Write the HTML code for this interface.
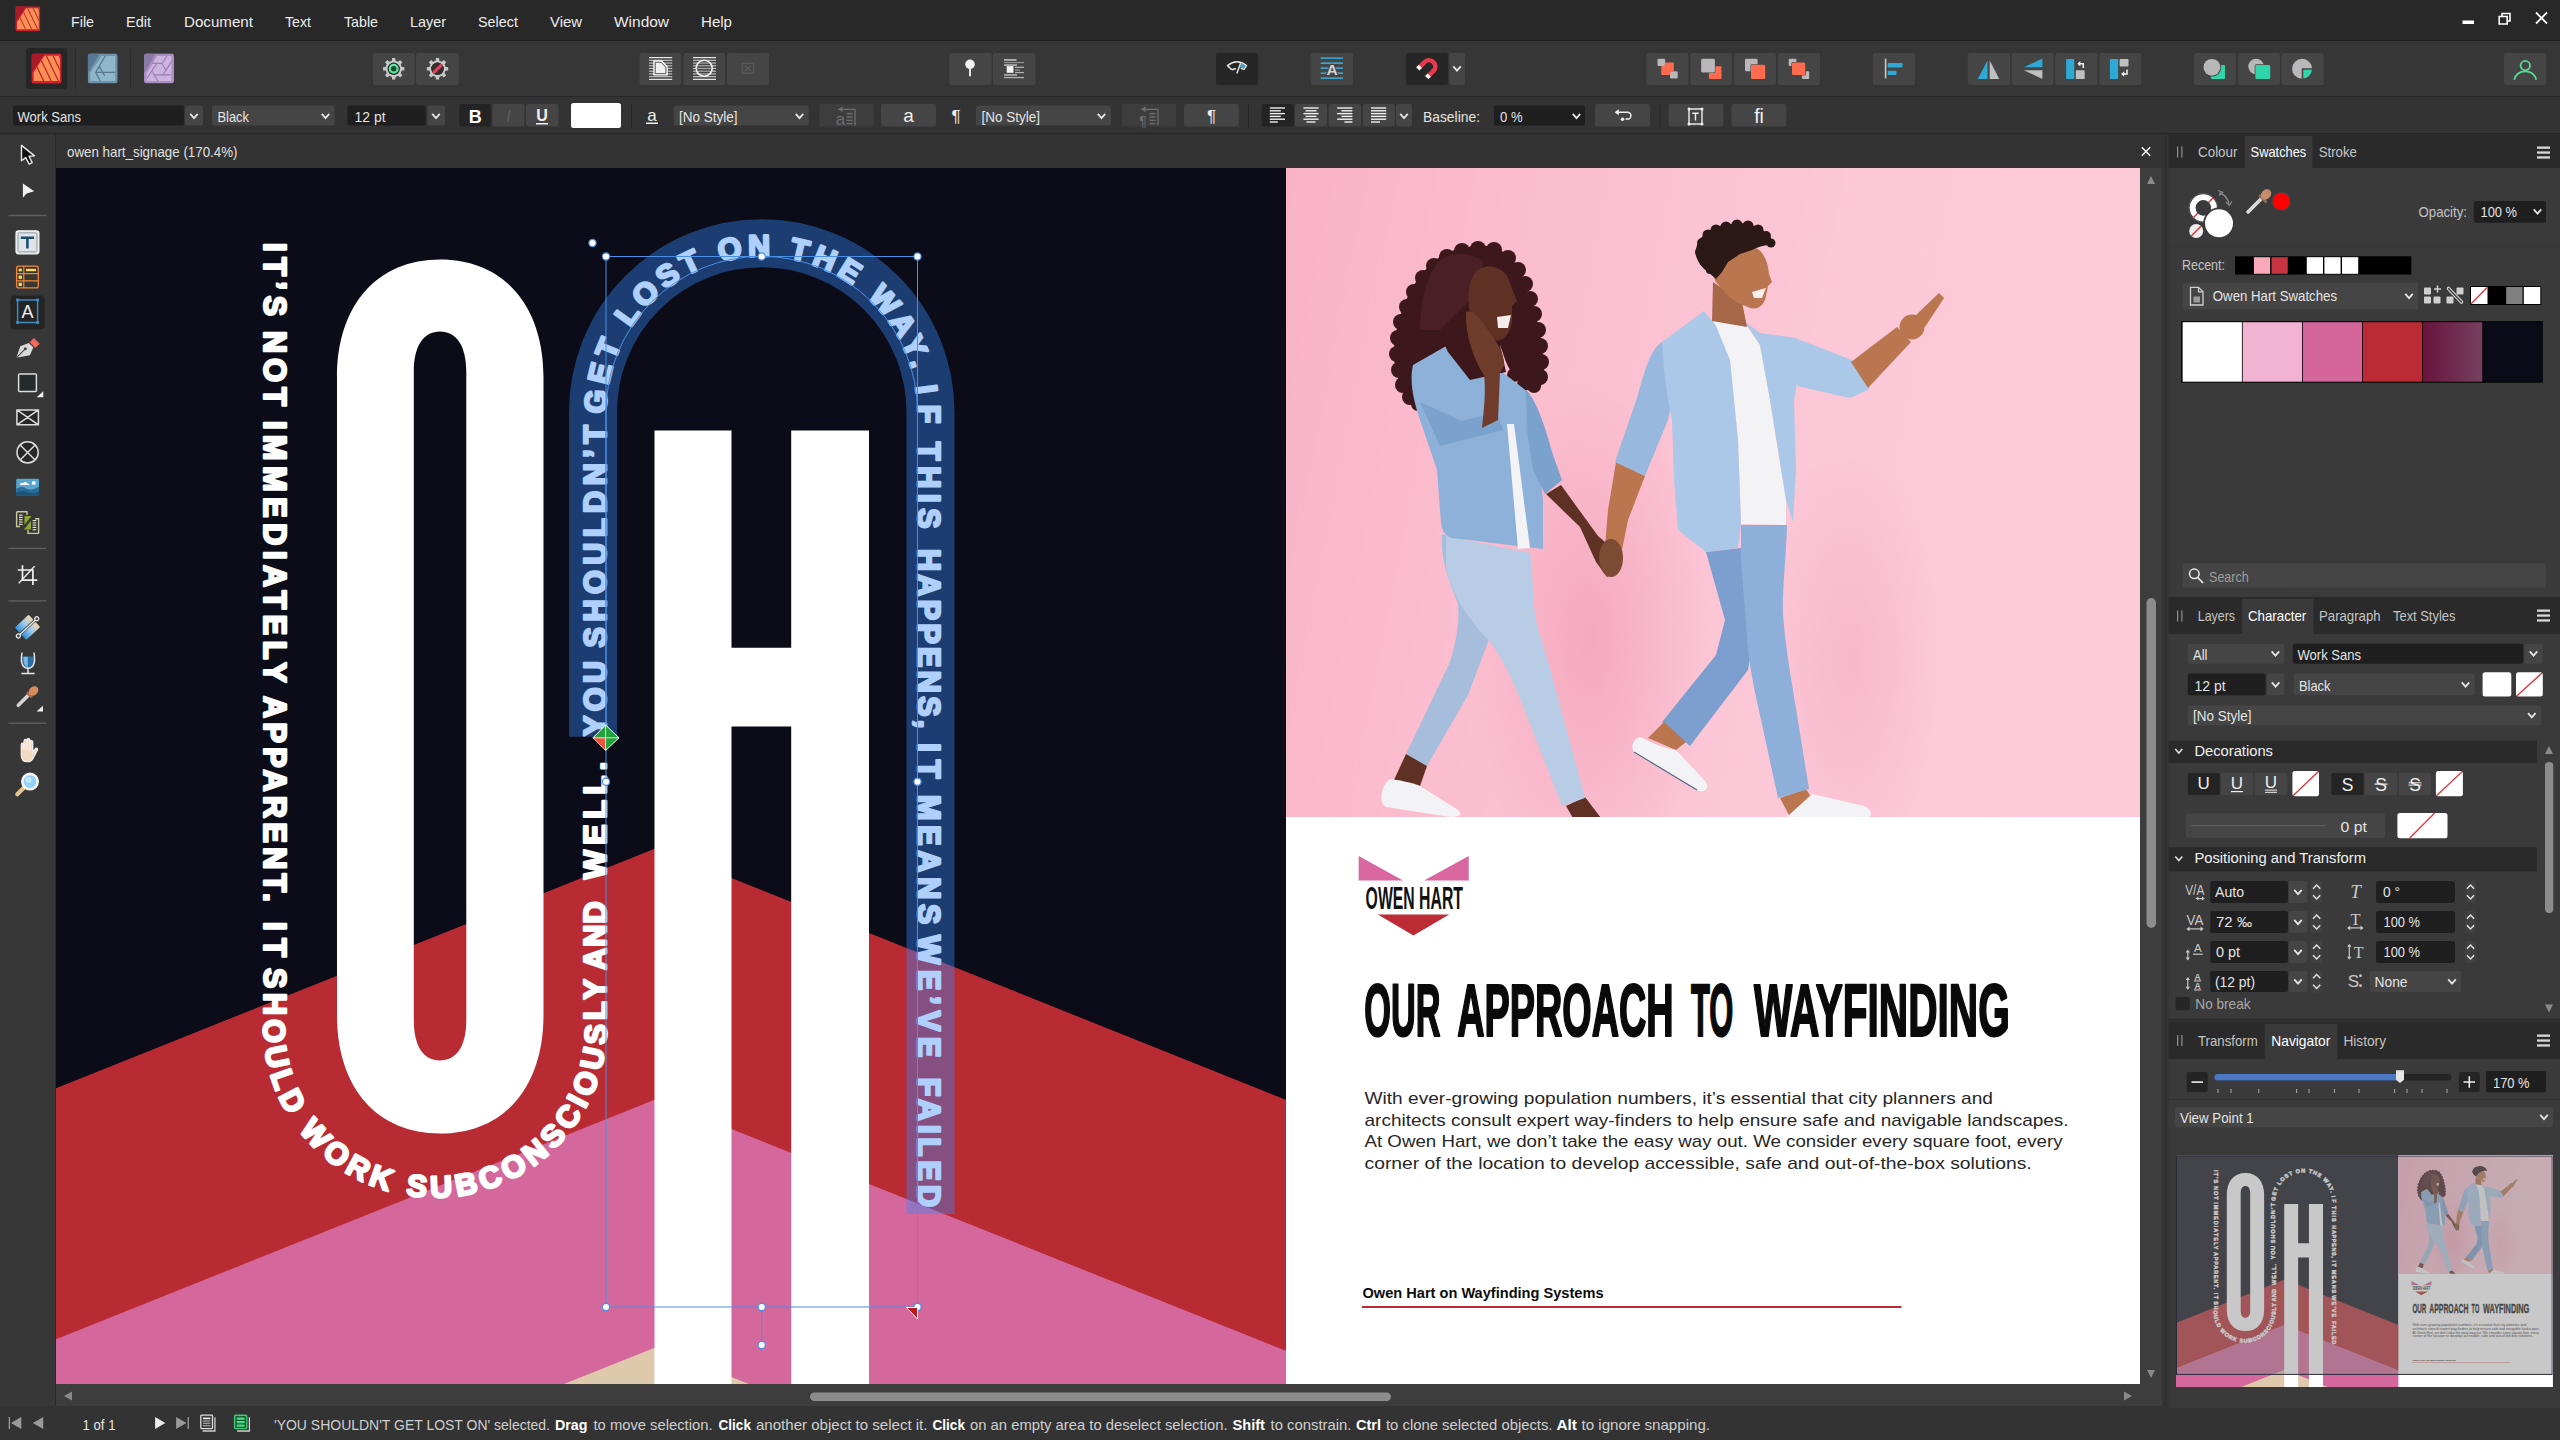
<!DOCTYPE html>
<html lang="en"><head><meta charset="utf-8"><title>Affinity Publisher - owen hart_signage</title>
<style>html,body{margin:0;padding:0;background:#333;overflow:hidden}svg{display:block;font-family:"Liberation Sans",sans-serif}</style></head>
<body><svg width="2560" height="1440" viewBox="0 0 2560 1440">
<g id="chrome">
<rect x="0" y="0" width="2560" height="1440" fill="#333333"/>
<rect x="0" y="0" width="2560" height="40" fill="#282828"/>
<rect x="0" y="40" width="2560" height="1" fill="#1e1e1e"/>
<rect x="0" y="41" width="2560" height="55" fill="#363636"/>
<rect x="0" y="96" width="2560" height="1" fill="#262626"/>
<rect x="0" y="97" width="2560" height="36" fill="#333333"/>
<rect x="0" y="133" width="2560" height="1.5" fill="#262626"/>
<rect x="0" y="134.5" width="55" height="1272" fill="#373737"/>
<rect x="55" y="134.5" width="1" height="1272" fill="#2a2a2a"/>
<rect x="56" y="134.5" width="2106" height="33.5" fill="#333333"/>
<text x="67" y="157" font-size="14.5" fill="#e0e0e0" textLength="170.5" lengthAdjust="spacingAndGlyphs">owen hart_signage (170.4%)</text>
<path d="M2141.800 147.300 l8.400 8.400 M2150.200 147.300 l-8.400 8.400" stroke="#f0f0f0" stroke-width="1.500" fill="none"/>
<rect x="2140" y="168" width="22" height="1216" fill="#3d3d3d"/>
<rect x="56" y="1384" width="2106" height="22" fill="#3d3d3d"/>
<rect x="2162" y="134.5" width="6.5" height="1272" fill="#343434"/>
<rect x="2164.5" y="134.5" width="2" height="1272" fill="#2e2e2e"/>
<path d="M2147 184 l4 -8 l4 8z" fill="#8a8a8a"/>
<path d="M2147 1370 l4 8 l4 -8z" fill="#8a8a8a"/>
<rect x="2146.5" y="598" width="9.5" height="330" rx="4.7" fill="#8c8c8c"/>
<path d="M72 1391.5 l-8 4.5 l8 4.5z" fill="#8a8a8a"/>
<path d="M2124 1391.5 l8 4.5 l-8 4.5z" fill="#8a8a8a"/>
<rect x="810" y="1392.5" width="581" height="8.5" rx="4.2" fill="#8c8c8c"/>
<rect x="0" y="1406" width="2560" height="34" fill="#333333"/>
<text x="71" y="27" font-size="15" fill="#ececec" textLength="23" lengthAdjust="spacingAndGlyphs">File</text>
<text x="126" y="27" font-size="15" fill="#ececec" textLength="25" lengthAdjust="spacingAndGlyphs">Edit</text>
<text x="184" y="27" font-size="15" fill="#ececec" textLength="69" lengthAdjust="spacingAndGlyphs">Document</text>
<text x="285" y="27" font-size="15" fill="#ececec" textLength="26" lengthAdjust="spacingAndGlyphs">Text</text>
<text x="344" y="27" font-size="15" fill="#ececec" textLength="34" lengthAdjust="spacingAndGlyphs">Table</text>
<text x="410" y="27" font-size="15" fill="#ececec" textLength="36" lengthAdjust="spacingAndGlyphs">Layer</text>
<text x="478" y="27" font-size="15" fill="#ececec" textLength="40" lengthAdjust="spacingAndGlyphs">Select</text>
<text x="550" y="27" font-size="15" fill="#ececec" textLength="32" lengthAdjust="spacingAndGlyphs">View</text>
<text x="614" y="27" font-size="15" fill="#ececec" textLength="55" lengthAdjust="spacingAndGlyphs">Window</text>
<text x="701" y="27" font-size="15" fill="#ececec" textLength="31" lengthAdjust="spacingAndGlyphs">Help</text>
<rect x="2462.5" y="20.5" width="11.5" height="3.5" fill="#fff"/>
<path d="M2499.2 16.5 h8 v7.5 h-8z M2502 16.5 v-3 h8 v7.5 h-3" fill="none" stroke="#fff" stroke-width="1.6"/>
<path d="M2536 12.5 l11 11 M2547 12.5 l-11 11" stroke="#fff" stroke-width="1.8" fill="none"/>
<rect x="26" y="48" width="41" height="41" rx="3" fill="#262626"/>
<rect x="75" y="49" width="1" height="40" fill="#2b2b2b"/>
<rect x="130" y="49" width="1" height="40" fill="#2b2b2b"/>
<rect x="373" y="53" width="41.6" height="32" rx="2.5" fill="#454545"/>
<rect x="416" y="53" width="42.7" height="32" rx="2.5" fill="#454545"/>
<rect x="639.5" y="53" width="41.5" height="32" rx="2.5" fill="#454545"/>
<rect x="683.5" y="53" width="41.5" height="32" rx="2.5" fill="#454545"/>
<rect x="727" y="53" width="42" height="32" rx="2.5" fill="#454545"/>
<rect x="949.4" y="53" width="42.2" height="32" rx="2.5" fill="#454545"/>
<rect x="993" y="53" width="42.5" height="32" rx="2.5" fill="#454545"/>
<rect x="1310.7" y="53" width="42.3" height="32" rx="2.5" fill="#454545"/>
<rect x="1449.5" y="53" width="15.5" height="32" rx="2.5" fill="#454545"/>
<rect x="1646.3" y="53" width="42.1" height="32" rx="2.5" fill="#454545"/>
<rect x="1690.3" y="53" width="41.7" height="32" rx="2.5" fill="#454545"/>
<rect x="1734" y="53" width="42" height="32" rx="2.5" fill="#454545"/>
<rect x="1778" y="53" width="42" height="32" rx="2.5" fill="#454545"/>
<rect x="1872.8" y="53" width="42.2" height="32" rx="2.5" fill="#454545"/>
<rect x="1967.8" y="53" width="42.2" height="32" rx="2.5" fill="#454545"/>
<rect x="2011.7" y="53" width="41.9" height="32" rx="2.5" fill="#454545"/>
<rect x="2055.3" y="53" width="42.2" height="32" rx="2.5" fill="#454545"/>
<rect x="2099.3" y="53" width="42" height="32" rx="2.5" fill="#454545"/>
<rect x="2194" y="53" width="42" height="32" rx="2.5" fill="#454545"/>
<rect x="2238" y="53" width="42" height="32" rx="2.5" fill="#454545"/>
<rect x="2281.6" y="53" width="42.2" height="32" rx="2.5" fill="#454545"/>
<rect x="2504" y="53" width="42.3" height="32" rx="2.5" fill="#454545"/>
<rect x="1216" y="53" width="42" height="32" rx="2.5" fill="#262626"/>
<rect x="1406" y="53" width="42" height="32" rx="2.5" fill="#262626"/>
<path d="M1453.25 66.4 L1457 70.6 L1460.75 66.4" fill="none" stroke="#e6e6e6" stroke-width="1.8"/>
<rect x="13" y="105.5" width="171" height="20" rx="2" fill="#1f1f1f"/>
<rect x="185" y="105.5" width="18" height="20" rx="2" fill="#454545"/>
<text x="17.5" y="121.5" font-size="14.5" fill="#e4e4e4" textLength="63.5" lengthAdjust="spacingAndGlyphs">Work Sans</text>
<path d="M190.25 113.9 L194 118.1 L197.75 113.9" fill="none" stroke="#e6e6e6" stroke-width="1.8"/>
<rect x="212" y="105.5" width="122.5" height="20" rx="2" fill="#454545"/>
<text x="217.5" y="121.5" font-size="14.5" fill="#e4e4e4" textLength="31.5" lengthAdjust="spacingAndGlyphs">Black</text>
<path d="M321.75 113.9 L325.5 118.1 L329.25 113.9" fill="none" stroke="#e6e6e6" stroke-width="1.8"/>
<rect x="347.5" y="105.5" width="78.2" height="20" rx="2" fill="#1f1f1f"/>
<rect x="427.5" y="105.5" width="17.5" height="20" rx="2" fill="#454545"/>
<text x="354.5" y="121.5" font-size="14.5" fill="#e4e4e4" textLength="31" lengthAdjust="spacingAndGlyphs">12 pt</text>
<path d="M432.25 113.9 L436 118.1 L439.75 113.9" fill="none" stroke="#e6e6e6" stroke-width="1.8"/>
<rect x="459.4" y="104" width="31.6" height="22.6" rx="2" fill="#242424"/>
<rect x="492.5" y="104" width="32" height="22.6" rx="2" fill="#454545"/>
<rect x="526" y="104" width="32.5" height="22.6" rx="2" fill="#454545"/>
<text x="475.2" y="122.5" font-size="18" fill="#fff" font-weight="bold" text-anchor="middle">B</text>
<text x="508.5" y="121.5" font-size="16.5" fill="#5e5e5e" text-anchor="middle" font-style="italic">I</text>
<text x="542" y="120.5" font-size="16" fill="#f0f0f0" font-weight="bold" text-anchor="middle">U</text>
<rect x="536" y="123" width="12" height="1.5" fill="#f0f0f0"/>
<rect x="571" y="103" width="50" height="25" rx="2.5" fill="#fff"/>
<rect x="631" y="105" width="1" height="22" fill="#262626"/>
<text x="652" y="121" font-size="17" fill="#eee" text-anchor="middle">a</text>
<rect x="646" y="122.5" width="12" height="1.5" fill="#eee"/>
<rect x="673.7" y="105.5" width="135" height="20" rx="2" fill="#454545"/>
<text x="679" y="121.5" font-size="14.5" fill="#e4e4e4" textLength="58.5" lengthAdjust="spacingAndGlyphs">[No Style]</text>
<path d="M795.75 113.9 L799.5 118.1 L803.25 113.9" fill="none" stroke="#e6e6e6" stroke-width="1.8"/>
<rect x="819.3" y="104" width="54.4" height="22.6" rx="2" fill="#3d3d3d"/>
<rect x="881" y="104" width="55" height="22.6" rx="2" fill="#454545"/>
<text x="908.5" y="122" font-size="19" fill="#eee" text-anchor="middle">a</text>
<text x="956" y="122" font-size="17" fill="#eee" text-anchor="middle">¶</text>
<rect x="976" y="105.5" width="135" height="20" rx="2" fill="#454545"/>
<text x="981.5" y="121.5" font-size="14.5" fill="#e4e4e4" textLength="58.5" lengthAdjust="spacingAndGlyphs">[No Style]</text>
<path d="M1097.75 113.9 L1101.5 118.1 L1105.25 113.9" fill="none" stroke="#e6e6e6" stroke-width="1.8"/>
<rect x="1121.6" y="104" width="54.4" height="22.6" rx="2" fill="#3d3d3d"/>
<rect x="1184" y="104" width="54.8" height="22.6" rx="2" fill="#454545"/>
<text x="1211.5" y="122" font-size="17" fill="#eee" text-anchor="middle">¶</text>
<rect x="1248" y="105" width="1" height="22" fill="#262626"/>
<rect x="1261.6" y="104" width="32.2" height="22.6" rx="2" fill="#242424"/>
<rect x="1295" y="104" width="32" height="22.6" rx="2" fill="#454545"/>
<rect x="1328.7" y="104" width="32.3" height="22.6" rx="2" fill="#454545"/>
<rect x="1362.8" y="104" width="31.9" height="22.6" rx="2" fill="#454545"/>
<rect x="1396" y="104" width="16" height="22.6" rx="2" fill="#454545"/>
<path d="M1400.25 113.9 L1404 118.1 L1407.75 113.9" fill="none" stroke="#e6e6e6" stroke-width="1.8"/>
<text x="1423" y="122" font-size="15" fill="#e4e4e4" textLength="57" lengthAdjust="spacingAndGlyphs">Baseline:</text>
<rect x="1494" y="105.5" width="91" height="20" rx="2" fill="#1f1f1f"/>
<text x="1500" y="121.5" font-size="14.5" fill="#e4e4e4" textLength="22.5" lengthAdjust="spacingAndGlyphs">0 %</text>
<path d="M1572.75 113.9 L1576.5 118.1 L1580.25 113.9" fill="none" stroke="#e6e6e6" stroke-width="1.8"/>
<rect x="1595" y="104" width="55" height="22.6" rx="2" fill="#454545"/>
<rect x="1659.5" y="105" width="1" height="22" fill="#262626"/>
<rect x="1668.6" y="104" width="54.9" height="22.6" rx="2" fill="#454545"/>
<rect x="1731.6" y="104" width="54.8" height="22.6" rx="2" fill="#454545"/>
<text x="1759" y="122.5" font-size="19.5" fill="#f0f0f0" text-anchor="middle">fi</text>
<text x="82.5" y="1429.5" font-size="14.5" fill="#e4e4e4" textLength="33" lengthAdjust="spacingAndGlyphs">1 of 1</text>
<text x="274" y="1429.5" font-size="14.5" fill="#cfcfcf" textLength="276" lengthAdjust="spacingAndGlyphs">'YOU SHOULDN'T GET LOST ON' selected.</text>
<text x="555" y="1429.5" font-size="14.5" fill="#fff" textLength="32.5" lengthAdjust="spacingAndGlyphs" font-weight="bold">Drag</text>
<text x="593.5" y="1429.5" font-size="14.5" fill="#cfcfcf" textLength="119" lengthAdjust="spacingAndGlyphs">to move selection.</text>
<text x="718.5" y="1429.5" font-size="14.5" fill="#fff" textLength="32.5" lengthAdjust="spacingAndGlyphs" font-weight="bold">Click</text>
<text x="756" y="1429.5" font-size="14.5" fill="#cfcfcf" textLength="171.5" lengthAdjust="spacingAndGlyphs">another object to select it.</text>
<text x="932.5" y="1429.5" font-size="14.5" fill="#fff" textLength="32.5" lengthAdjust="spacingAndGlyphs" font-weight="bold">Click</text>
<text x="970" y="1429.5" font-size="14.5" fill="#cfcfcf" textLength="257.5" lengthAdjust="spacingAndGlyphs">on an empty area to deselect selection.</text>
<text x="1232.5" y="1429.5" font-size="14.5" fill="#fff" textLength="32.5" lengthAdjust="spacingAndGlyphs" font-weight="bold">Shift</text>
<text x="1270.5" y="1429.5" font-size="14.5" fill="#cfcfcf" textLength="81" lengthAdjust="spacingAndGlyphs">to constrain.</text>
<text x="1356" y="1429.5" font-size="14.5" fill="#fff" textLength="25" lengthAdjust="spacingAndGlyphs" font-weight="bold">Ctrl</text>
<text x="1386" y="1429.5" font-size="14.5" fill="#cfcfcf" textLength="166.5" lengthAdjust="spacingAndGlyphs">to clone selected objects.</text>
<text x="1556.5" y="1429.5" font-size="14.5" fill="#fff" textLength="20.5" lengthAdjust="spacingAndGlyphs" font-weight="bold">Alt</text>
<text x="1581.5" y="1429.5" font-size="14.5" fill="#cfcfcf" textLength="128.5" lengthAdjust="spacingAndGlyphs">to ignore snapping.</text>
</g>
<g id="canvas">
<defs><clipPath id="cv"><rect x="56" y="168" width="2084" height="1216"/></clipPath>
<g id="art"><rect x="0" y="100" width="1286" height="1400" fill="#0b0c17"/>
<path d="M0 1110.6 L656.5 848 L1300 1105.4 L1300 1500 L0 1500z" fill="#b92b33"/>
<path d="M0 1361.6 L656.5 1099 L1300 1356.4 L1300 1500 L0 1500z" fill="#d4679b"/>
<path d="M0 1609.6 L656.5 1347 L1300 1604.4 L1300 1500 L0 1500z" fill="#dfc9ad"/>
<path fill-rule="evenodd" fill="#fff" d="M337 378 C337 304 378 259.5 440.3 259.5 C502.5 259.5 543.5 304 543.5 378 L543.5 1015 C543.5 1089 502.5 1133.5 440.3 1133.5 C378 1133.5 337 1089 337 1015z M413.8 372 C413.8 345 424 331.5 440 331.5 C456 331.5 466.3 345 466.3 372 L466.3 1020 C466.3 1047 456 1060.500 440 1060.500 C424 1060.500 413.800 1047 413.800 1020z"/>
<path fill="#fff" d="M654.5 430.5 H731.5 V647.7 H791.2 V430.5 H869 V1500 H791.2 V726.5 H731.5 V1500 H654.5z"/>
<path id="tp1" d="M263.5 243 L263.5 1026 A171.5 171.5 0 0 0 606.5 1026 L606.5 700" fill="none"/>
<text font-size="30.5" font-weight="bold" fill="#fff" stroke="#fff" stroke-width="2.4" stroke-linejoin="round"><textPath href="#tp1" startOffset="0" textLength="73" lengthAdjust="spacing">IT’S</textPath><textPath href="#tp1" startOffset="88" textLength="75" lengthAdjust="spacing">NOT</textPath><textPath href="#tp1" startOffset="178" textLength="261.5" lengthAdjust="spacing">IMMEDIATELY</textPath><textPath href="#tp1" startOffset="453" textLength="205.7" lengthAdjust="spacing">APPARENT.</textPath><textPath href="#tp1" startOffset="679" textLength="35" lengthAdjust="spacing">IT</textPath><textPath href="#tp1" startOffset="725" textLength="643.3" lengthAdjust="spacing">SHOULD WORK SUBCONSCIOUSLY</textPath><textPath href="#tp1" startOffset="1377.5" textLength="68.6" lengthAdjust="spacing">AND</textPath><textPath href="#tp1" startOffset="1468.5" textLength="117.4" lengthAdjust="spacing">WELL.</textPath></text>
<path id="tp2" d="M606 737 L606 412 A155.75 155.75 0 0 1 917.5 412 L917.5 1400" fill="none"/>
<text font-size="30.5" font-weight="bold" fill="#fff" stroke="#fff" stroke-width="2.4" stroke-linejoin="round"><textPath href="#tp2" startOffset="1" textLength="75" lengthAdjust="spacing">YOU</textPath><textPath href="#tp2" startOffset="89.5" textLength="222.5" lengthAdjust="spacing">SHOULDN’T</textPath><textPath href="#tp2" startOffset="323" textLength="448" lengthAdjust="spacing">GET LOST ON THE WAY.</textPath><textPath href="#tp2" startOffset="788.3" textLength="37" lengthAdjust="spacing">IF</textPath><textPath href="#tp2" startOffset="843.8" textLength="86.8" lengthAdjust="spacing">THIS</textPath><textPath href="#tp2" startOffset="950.9" textLength="179.4" lengthAdjust="spacing">HAPPENS,</textPath><textPath href="#tp2" startOffset="1145.1" textLength="35.2" lengthAdjust="spacing">IT</textPath><textPath href="#tp2" startOffset="1196.9" textLength="129.4" lengthAdjust="spacing">MEANS</textPath><textPath href="#tp2" startOffset="1337.3" textLength="122" lengthAdjust="spacing">WE’VE</textPath><textPath href="#tp2" startOffset="1479.6" textLength="129.3" lengthAdjust="spacing">FAILED</textPath></text><rect x="1286" y="100" width="900" height="1400" fill="#fff"/>
<rect x="1286" y="100" width="854" height="717" fill="#fcc4d4"/>
<path d="M1358.7 856 V880.5 H1403z M1468.7 856 V880.5 H1424z" fill="#d9669f"/>
<path d="M1377.8 914.5 H1449.2 L1413.4 935.5z" fill="#bd2c35"/>
<text x="1365.6" y="908.8" font-size="31.5" fill="#111" textLength="97.4" lengthAdjust="spacingAndGlyphs" font-weight="bold">OWEN HART</text>
<text x="1364.3" y="1036" font-size="73.5" fill="#0a0a0a" textLength="76.3" lengthAdjust="spacingAndGlyphs" font-weight="bold" stroke="#0a0a0a" stroke-width="2.2" stroke-linejoin="round">OUR</text>
<text x="1457.2" y="1036" font-size="73.5" fill="#0a0a0a" textLength="216.4" lengthAdjust="spacingAndGlyphs" font-weight="bold" stroke="#0a0a0a" stroke-width="2.2" stroke-linejoin="round">APPROACH</text>
<text x="1691" y="1036" font-size="73.5" fill="#0a0a0a" textLength="42.3" lengthAdjust="spacingAndGlyphs" font-weight="bold" stroke="#0a0a0a" stroke-width="2.2" stroke-linejoin="round">TO</text>
<text x="1753.9" y="1036" font-size="73.5" fill="#0a0a0a" textLength="255.9" lengthAdjust="spacingAndGlyphs" font-weight="bold" stroke="#0a0a0a" stroke-width="2.2" stroke-linejoin="round">WAYFINDING</text>
<text x="1364.5" y="1104.3" font-size="16.6" fill="#262626" textLength="628.5" lengthAdjust="spacingAndGlyphs">With ever-growing population numbers, it’s essential that city planners and</text>
<text x="1364.5" y="1125.75" font-size="16.6" fill="#262626" textLength="704.1" lengthAdjust="spacingAndGlyphs">architects consult expert way-finders to help ensure safe and navigable landscapes.</text>
<text x="1364.5" y="1147.2" font-size="16.6" fill="#262626" textLength="698" lengthAdjust="spacingAndGlyphs">At Owen Hart, we don’t take the easy way out. We consider every square foot, every</text>
<text x="1364.5" y="1168.65" font-size="16.6" fill="#262626" textLength="667.2" lengthAdjust="spacingAndGlyphs">corner of the location to develop accessible, safe and out-of-the-box solutions.</text>
<text x="1362.5" y="1297.5" font-size="14" fill="#0c0c0c" textLength="241" lengthAdjust="spacingAndGlyphs" font-weight="bold">Owen Hart on Wayfinding Systems</text>
<rect x="1362" y="1306" width="539.5" height="2" fill="#b92b33"/><clipPath id="phc"><rect x="1286" y="168" width="854" height="649"/></clipPath><g clip-path="url(#phc)">
<linearGradient id="phg" x1="0" y1="0" x2="1" y2="0.15"><stop offset="0" stop-color="#f9b3c7"/><stop offset="0.35" stop-color="#fbbfd0"/><stop offset="0.7" stop-color="#fcc8d7"/><stop offset="1" stop-color="#fccad8"/></linearGradient>
<rect x="1286" y="168" width="854" height="649" fill="url(#phg)"/>
<radialGradient id="shg"><stop offset="0" stop-color="#ec86a4" stop-opacity="0.42"/><stop offset="1" stop-color="#ec86a4" stop-opacity="0"/></radialGradient>
<ellipse cx="1590" cy="640" rx="120" ry="260" fill="url(#shg)"/>
<ellipse cx="1850" cy="660" rx="90" ry="220" fill="url(#shg)" opacity="0.6"/>
<path d="M1478 246 C1500 243 1519 260 1524 284 C1535 306 1543 340 1544 372 C1544 386 1538 393 1531 389 C1521 384 1512 376 1506 362 L1500 345 L1470 345 L1440 360 L1426 396 C1421 408 1416 411 1413 402 C1399 390 1391 365 1395 340 C1399 310 1411 285 1427 268 C1441 252 1459 247 1478 246z" fill="#3c171c"/>
<g fill="#3c171c"><circle cx="1478" cy="249" r="8"/><circle cx="1462" cy="251" r="8"/><circle cx="1447" cy="257" r="8"/><circle cx="1434" cy="266" r="8"/><circle cx="1423" cy="278" r="8"/><circle cx="1414" cy="292" r="8"/><circle cx="1407" cy="307" r="8"/><circle cx="1401" cy="322" r="8"/><circle cx="1398" cy="338" r="8"/><circle cx="1397" cy="354" r="8"/><circle cx="1399" cy="370" r="8"/><circle cx="1403" cy="385" r="8"/><circle cx="1410" cy="397" r="8"/><circle cx="1418" cy="404" r="7"/><circle cx="1494" cy="250" r="8"/><circle cx="1508" cy="258" r="8"/><circle cx="1518" cy="270" r="8"/><circle cx="1525" cy="284" r="8"/><circle cx="1530" cy="299" r="8"/><circle cx="1534" cy="314" r="8"/><circle cx="1538" cy="330" r="8"/><circle cx="1540" cy="346" r="8"/><circle cx="1541" cy="362" r="8"/><circle cx="1540" cy="377" r="8"/><circle cx="1534" cy="386" r="7"/><circle cx="1524" cy="384" r="7"/><circle cx="1514" cy="375" r="7"/></g>
<path d="M1438 262 C1452 250 1470 252 1484 262 L1470 300 L1440 330 L1420 330 C1420 300 1428 275 1438 262z" fill="#4a2026"/>
<path d="M1442 534 C1440 560 1450 585 1458 603 C1460 625 1455 645 1450 662 L1406 754 L1427 766 L1468 695 L1488 642 L1502 600 L1470 545z" fill="#a6bedc"/>
<path d="M1406 754 L1427 766 L1420 786 L1394 780z" fill="#5f3124"/>
<path d="M1390 779 C1398 780 1410 782 1420 786 L1458 810 C1463 815 1459 817 1450 817 L1386 807 C1378 803 1381 785 1390 779z" fill="#f3f3f6"/>
<path d="M1566 806 L1585 797 L1601 818 L1573 818z" fill="#5f3124"/>
<path d="M1446 536 L1530 553 C1534 580 1532 600 1536 620 C1542 645 1550 665 1553 680 L1585 798 L1562 806 L1519 696 C1508 670 1498 652 1490 642 C1470 620 1454 600 1446 570z" fill="#b8cce6"/>
<path d="M1546 494 L1561 485 L1598 536 L1612 548 L1620 568 L1607 577 L1596 562 L1580 527z" fill="#5f3124"/>
<path d="M1448 345 L1413 365 C1409 382 1414 402 1420 420 L1437 470 L1441 523 C1442 532 1446 536 1452 538 L1543 549 L1543 500 L1538 460 L1534 430 L1528 392 L1510 378 L1502 372 L1490 384 L1468 348z" fill="#8db1d9"/>
<path d="M1526 390 C1537 400 1546 430 1553 455 L1562 480 L1545 494 L1533 470 L1527 430z" fill="#7ba1cd"/>
<path d="M1420 402 L1440 446 L1503 430 L1497 412 L1462 421z" fill="#7ba1cd"/>
<path d="M1507 424 L1514 424 L1530 548 L1518 549z" fill="#f3f3f6"/>
<path d="M1440 335 L1500 345 L1506 372 L1470 380 L1448 352z" fill="#3c171c"/>
<path d="M1481 268 C1494 263 1508 270 1511 286 L1517 301 L1512 306 L1512 322 C1510 332 1506 338 1500 340 C1492 342 1484 338 1478 330 C1470 320 1467 305 1469 290 C1470 279 1474 272 1481 268z" fill="#5f3124"/>
<path d="M1497 317 L1511 315 L1508 328 L1498 328z" fill="#f4ecec"/>
<path d="M1466 312 C1472 309 1480 318 1488 330 C1496 342 1505 352 1504 366 L1500 373 L1498 420 L1482 428 C1484 410 1486 390 1484 375 C1474 360 1465 335 1466 312z" fill="#6f3c2c"/>
<path d="M1706 552 L1741 548 L1760 600 L1748 670 L1690 746 L1662 722 L1716 655 L1725 620z" fill="#7d9fd0"/>
<path d="M1648 738 L1676 750 L1686 742 L1664 722z" fill="#b9764f"/>
<path d="M1640 737 C1648 740 1660 748 1676 750 L1706 782 C1710 790 1704 793 1696 790 L1634 753 C1630 746 1634 738 1640 737z" fill="#f3f3f6"/>
<path d="M1634 752 L1697 790" fill="none" stroke="#55607a" stroke-width="1.2"/>
<path d="M1780 798 L1806 789 L1813 800 L1790 817z" fill="#b9764f"/>
<path d="M1789 815 L1812 794 L1864 806 C1873 810 1873 817 1866 818 L1788 818z" fill="#f3f3f6"/>
<path d="M1741 525 L1787 525 C1786 560 1782 590 1783 615 C1786 650 1790 670 1792 684 L1809 789 L1778 798 L1758 706 C1752 680 1750 665 1748 650 L1741 560z" fill="#8eafd9"/>
<path d="M1616 462 L1645 476 L1628 520 L1622 550 L1605 546 L1608 510z" fill="#b9764f"/>
<ellipse cx="1611" cy="558" rx="12" ry="19" fill="#7d4a34"/>
<path d="M1712 318 L1747 326 L1760 345 L1770 400 L1786 500 L1786 525 L1741 524 L1738 440 L1730 360z" fill="#f3f3f6"/>
<path d="M1662 342 C1650 350 1645 370 1638 395 L1615 462 L1645 476 L1668 420 L1676 380z" fill="#98b8dd"/>
<path d="M1704 311 L1716 326 L1730 360 L1738 440 L1741 524 L1738 548 L1706 552 L1678 530 L1674 480 L1672 420 L1668 400 L1664 370 L1662 342z" fill="#abc8e8"/>
<path d="M1745 322 L1760 333 L1796 338 L1801 360 L1794 400 L1796 470 L1793 522 L1786 500 L1770 400 L1760 345z" fill="#abc8e8"/>
<path d="M1795 338 L1852 360 L1870 389 L1850 398 L1797 386z" fill="#abc8e8"/>
<path d="M1851 362 L1868 388 L1911 342 L1897 327z" fill="#b9764f"/>
<circle cx="1912" cy="327" r="12.500" fill="#b9764f"/>
<path d="M1914 317 L1939 293 L1944 298 L1925 327z" fill="#b9764f"/>
<path d="M1713 282 L1742 302 L1747 327 L1712 321z" fill="#a7684a"/>
<path d="M1722 262 L1740 252 L1756 248 C1764 252 1768 262 1769 274 L1772 282 L1768 286 L1766 296 C1764 306 1758 310 1750 308 L1736 302 L1728 296 L1716 282 C1712 276 1714 268 1722 262z" fill="#b9764f"/>
<path d="M1752 292 L1766 288 L1762 298 L1754 298z" fill="#f6efef"/>
<path d="M1696 256 C1694 240 1708 226 1730 224 C1752 220 1772 232 1774 246 C1768 244 1760 246 1752 250 L1740 254 L1728 262 L1722 272 L1716 279 L1708 272 C1702 268 1698 262 1696 256z" fill="#2b1817"/>
<g fill="#2b1817"><circle cx="1700" cy="252" r="5"/><circle cx="1702" cy="243" r="5"/><circle cx="1708" cy="235" r="5.5"/><circle cx="1716" cy="230" r="5.5"/><circle cx="1726" cy="227" r="5.5"/><circle cx="1737" cy="225" r="5.5"/><circle cx="1748" cy="226" r="5.5"/><circle cx="1758" cy="230" r="5.5"/><circle cx="1766" cy="236" r="5"/><circle cx="1771" cy="243" r="4.5"/><circle cx="1704" cy="262" r="4.5"/><circle cx="1710" cy="270" r="4"/></g>
</g></g></defs>
<g clip-path="url(#cv)">
<rect x="56" y="168" width="2084" height="1216" fill="#fff"/>
<use href="#art"/>
<path d="M593 736.7 L593 412 A168.75 168.75 0 0 1 930.5 412 L930.5 1214" fill="none" stroke="#3786fa" stroke-opacity="0.4" stroke-width="48"/>
<path d="M606 737 L606 412 A155.75 155.75 0 0 1 917.5 412 L917.5 1214" fill="none" stroke="#4c8fe6" stroke-width="1"/>
<path d="M606 256.5 H917.5 V1307 H606z M761.7 1307 V1345" fill="none" stroke="#4c8fe6" stroke-width="1"/>
<circle cx="606" cy="256.5" r="3.6" fill="#fff" stroke="#4c8fe6" stroke-width="1.2"/>
<circle cx="761.7" cy="256.5" r="3.6" fill="#fff" stroke="#4c8fe6" stroke-width="1.2"/>
<circle cx="917.5" cy="256.5" r="3.6" fill="#fff" stroke="#4c8fe6" stroke-width="1.2"/>
<circle cx="606" cy="781.7" r="3.6" fill="#fff" stroke="#4c8fe6" stroke-width="1.2"/>
<circle cx="917.5" cy="781.7" r="3.6" fill="#fff" stroke="#4c8fe6" stroke-width="1.2"/>
<circle cx="606" cy="1307" r="3.6" fill="#fff" stroke="#4c8fe6" stroke-width="1.2"/>
<circle cx="761.7" cy="1307" r="3.6" fill="#fff" stroke="#4c8fe6" stroke-width="1.2"/>
<circle cx="917.5" cy="1307" r="3.6" fill="#fff" stroke="#4c8fe6" stroke-width="1.2"/>
<circle cx="761.7" cy="1345" r="3.6" fill="#fff" stroke="#4c8fe6" stroke-width="1.2"/>
<circle cx="592.5" cy="243" r="3.6" fill="#fff" stroke="#4c8fe6" stroke-width="1.2"/>
<path d="M605.6 725 L619 737.8 L605.6 750.5 L593 737.8z" fill="#1fa33a" stroke="#fff" stroke-width="1"/>
<path d="M593 737.8 H605.6 V750.5z" fill="#e8553a"/>
<path d="M593 737.8 H619 M605.6 725 V750.5" stroke="#fff" stroke-width="0.8"/>
<path d="M906.5 1307.5 H917.5 V1319z" fill="#c01818" stroke="#fff" stroke-width="1"/>
</g>
</g>
<g id="panels">
<rect x="2168.5" y="134.5" width="391.5" height="1273.5" fill="#3a3a3a"/>
<rect x="2168.5" y="134.5" width="391.5" height="33.5" fill="#2a2a2a"/>
<rect x="2245" y="136" width="67.5" height="32" fill="#3a3a3a"/>
<rect x="2177" y="146.5" width="1.3" height="11" fill="#8a8a8a"/><rect x="2181.2" y="146.5" width="1.3" height="11" fill="#8a8a8a"/>
<text x="2198" y="157" font-size="14.5" fill="#c4c4c4" textLength="39.5" lengthAdjust="spacingAndGlyphs">Colour</text>
<text x="2250.6" y="157" font-size="14.5" fill="#fff" textLength="55.7" lengthAdjust="spacingAndGlyphs">Swatches</text>
<text x="2318.7" y="157" font-size="14.5" fill="#c4c4c4" textLength="38.3" lengthAdjust="spacingAndGlyphs">Stroke</text>
<rect x="2537" y="146.5" width="13" height="2.3" fill="#d8d8d8"/><rect x="2537" y="151.4" width="13" height="2.3" fill="#d8d8d8"/><rect x="2537" y="156.3" width="13" height="2.3" fill="#d8d8d8"/>
<rect x="2168.5" y="246" width="391.5" height="1" fill="#363636"/>
<circle cx="2203.3" cy="207.8" r="14.6" fill="#3a3a3a" stroke="#555" stroke-width="1"/>
<circle cx="2203.3" cy="207.8" r="10.6" fill="none" stroke="#fff" stroke-width="6"/>
<path d="M2193.5 217.5 L2213 198" stroke="#e0383e" stroke-width="1.6"/>
<circle cx="2203.3" cy="207.8" r="7.6" fill="#3a3a3a"/>
<circle cx="2196.2" cy="231" r="7" fill="#eee"/><path d="M2191.3 236 L2201.2 226" stroke="#e0383e" stroke-width="1.6"/>
<circle cx="2219" cy="223.3" r="15.8" fill="#3a3a3a"/><circle cx="2219" cy="223.3" r="14" fill="#fff"/>
<path d="M2219.5 193 q8 2 9.5 11.500" fill="none" stroke="#8a8a8a" stroke-width="1.3"/><path d="M2218 190.500 l4.500 1.700 l-3.500 3.400 M2226 202 l3.400 3.600 l2.500 -4.300" fill="none" stroke="#8a8a8a" stroke-width="1.200"/>
<path d="M2248 212 L2262 198" stroke="#d9d9d9" stroke-width="3.6" stroke-linecap="round"/><path d="M2259 195 l7.500 7.500" stroke="#8a6a55" stroke-width="2.5"/><ellipse cx="2266" cy="194.500" rx="5.800" ry="4.600" transform="rotate(-45 2266 194.500)" fill="#c78d6d"/>
<circle cx="2281.2" cy="201.3" r="9.8" fill="#444"/><circle cx="2281.2" cy="201.3" r="8.6" fill="#fe0000"/>
<text x="2418.5" y="217.3" font-size="14.5" fill="#c4c4c4" textLength="48.5" lengthAdjust="spacingAndGlyphs">Opacity:</text>
<rect x="2473.8" y="201" width="72.2" height="21.8" rx="2" fill="#1f1f1f"/>
<text x="2480.5" y="217.3" font-size="14.5" fill="#e4e4e4" textLength="36.5" lengthAdjust="spacingAndGlyphs">100 %</text>
<path d="M2533.75 209.4 L2537.5 213.6 L2541.25 209.4" fill="none" stroke="#e6e6e6" stroke-width="1.8"/>
<text x="2182" y="270" font-size="14.5" fill="#c4c4c4" textLength="43" lengthAdjust="spacingAndGlyphs">Recent:</text>
<rect x="2235" y="256.3" width="176.3" height="18.3" fill="#000"/>
<rect x="2253.92" y="257.2" width="16.2" height="16.6" fill="#f8aabb"/>
<rect x="2271.54" y="257.2" width="16.2" height="16.6" fill="#c8343f"/>
<rect x="2306.78" y="257.2" width="16.2" height="16.6" fill="#fff"/>
<rect x="2324.4" y="257.2" width="16.2" height="16.6" fill="#fff"/>
<rect x="2342.02" y="257.2" width="16.2" height="16.6" fill="#fff"/>
<rect x="2182.7" y="282.8" width="235.7" height="26.8" rx="2" fill="#454545"/>
<path d="M2190.500 287.300 h8 l4.500 4.500 v13.200 h-12.500z" fill="none" stroke="#cfcfcf" stroke-width="1.300"/><rect x="2193.500" y="296.500" width="6.500" height="6" fill="#9a9a9a"/><path d="M2198.500 287.300 v4.500 h4.500" fill="none" stroke="#cfcfcf" stroke-width="1.200"/>
<text x="2212.8" y="301.3" font-size="14.5" fill="#e4e4e4" textLength="124.2" lengthAdjust="spacingAndGlyphs">Owen Hart Swatches</text>
<path d="M2405.25 293.9 L2409 298.1 L2412.75 293.9" fill="none" stroke="#e6e6e6" stroke-width="1.8"/>
<rect x="2424" y="296.5" width="7" height="7" rx="1" fill="#d0d0d0"/>
<rect x="2424" y="287.5" width="7" height="7" rx="1" fill="#d0d0d0"/>
<rect x="2433.5" y="296.5" width="7" height="7" rx="1" fill="#d0d0d0"/>
<path d="M2437.500 285.500 v7 M2434 289 h7" stroke="#d0d0d0" stroke-width="1.500"/>
<rect x="2446.5" y="296.5" width="7" height="7" rx="1" fill="#d0d0d0"/>
<rect x="2456.5" y="287.5" width="7" height="7" rx="1" fill="#d0d0d0"/>
<path d="M2448.500 288.500 L2461.500 302" stroke="#d0d0d0" stroke-width="3.600" stroke-linecap="round"/><path d="M2448.500 288.500 L2461.500 302" stroke="#3a3a3a" stroke-width="1.200" stroke-linecap="round"/>
<rect x="2470" y="286" width="71.3" height="19" fill="#000"/>
<clipPath id="c2471_287"><rect x="2471" y="287" width="16.5" height="17" rx="0"/></clipPath><rect x="2471" y="287" width="16.5" height="17" rx="0" fill="#fff"/><path d="M2471 304 L2487.5 287" stroke="#e0383e" stroke-width="1.4" clip-path="url(#c2471_287)"/>
<rect x="2506.2" y="287" width="16.3" height="17" fill="#808080"/>
<rect x="2523.8" y="287" width="16.5" height="17" fill="#fff"/>
<rect x="2181.2" y="321.2" width="361.6" height="61.5" fill="#000"/>
<linearGradient id="sg" x1="0" x2="1" y1="0" y2="0"><stop offset="0" stop-color="#69143c"/><stop offset="1" stop-color="#76405f"/></linearGradient>
<rect x="2182.6" y="322.2" width="59.3" height="59.5" fill="#fff"/>
<rect x="2242.7" y="322.2" width="59.3" height="59.5" fill="#f2b2d2"/>
<rect x="2302.8" y="322.2" width="59.3" height="59.5" fill="#d5669c"/>
<rect x="2362.9" y="322.2" width="59.3" height="59.5" fill="#ba2b35"/>
<rect x="2423" y="322.2" width="59.3" height="59.5" fill="url(#sg)"/>
<rect x="2483.1" y="322.2" width="59.3" height="59.5" fill="#0a0b17"/>
<rect x="2182.7" y="563.4" width="363.3" height="24.4" rx="2" fill="#454545"/>
<circle cx="2194.300" cy="573.800" r="4.800" fill="none" stroke="#e8e8e8" stroke-width="1.500"/><path d="M2197.800 577.500 l5.200 5.500" stroke="#e8e8e8" stroke-width="1.800"/>
<text x="2209" y="582" font-size="14.5" fill="#9c9c9c" textLength="39.8" lengthAdjust="spacingAndGlyphs">Search</text>
<rect x="2168.5" y="597" width="391.5" height="36.8" fill="#2a2a2a"/>
<rect x="2242" y="599" width="71.4" height="35" fill="#3a3a3a"/>
<rect x="2177" y="610.5" width="1.3" height="11" fill="#8a8a8a"/><rect x="2181.2" y="610.5" width="1.3" height="11" fill="#8a8a8a"/>
<rect x="2537" y="609.5" width="13" height="2.3" fill="#d8d8d8"/><rect x="2537" y="614.4" width="13" height="2.3" fill="#d8d8d8"/><rect x="2537" y="619.3" width="13" height="2.3" fill="#d8d8d8"/>
<text x="2197.8" y="621" font-size="14.5" fill="#c4c4c4" textLength="37.2" lengthAdjust="spacingAndGlyphs">Layers</text>
<text x="2248" y="621" font-size="14.5" fill="#fff" textLength="58.3" lengthAdjust="spacingAndGlyphs">Character</text>
<text x="2319" y="621" font-size="14.5" fill="#c4c4c4" textLength="61.6" lengthAdjust="spacingAndGlyphs">Paragraph</text>
<text x="2393" y="621" font-size="14.5" fill="#c4c4c4" textLength="62.4" lengthAdjust="spacingAndGlyphs">Text Styles</text>
<rect x="2187.8" y="643.7" width="96.6" height="20.1" rx="2" fill="#454545"/>
<text x="2193" y="659.5" font-size="14.5" fill="#e4e4e4" textLength="14.5" lengthAdjust="spacingAndGlyphs">All</text>
<path d="M2271.65 651.4 L2275.4 655.6 L2279.15 651.4" fill="none" stroke="#e6e6e6" stroke-width="1.8"/>
<rect x="2292.8" y="643.7" width="230.6" height="20.1" rx="2" fill="#1f1f1f"/>
<rect x="2524.4" y="643.7" width="18.2" height="20.1" rx="2" fill="#454545"/>
<path d="M2529.75 651.4 L2533.5 655.6 L2537.25 651.4" fill="none" stroke="#e6e6e6" stroke-width="1.8"/>
<text x="2297.5" y="659.5" font-size="14.5" fill="#e4e4e4" textLength="63.5" lengthAdjust="spacingAndGlyphs">Work Sans</text>
<rect x="2187.8" y="673.5" width="77.8" height="21.8" rx="2" fill="#1f1f1f"/>
<rect x="2267" y="673.5" width="17.4" height="21.8" rx="2" fill="#454545"/>
<path d="M2271.85 682.4 L2275.6 686.6 L2279.35 682.4" fill="none" stroke="#e6e6e6" stroke-width="1.8"/>
<text x="2194.5" y="691" font-size="14.5" fill="#e4e4e4" textLength="31" lengthAdjust="spacingAndGlyphs">12 pt</text>
<rect x="2293.7" y="673.5" width="181" height="21.8" rx="2" fill="#454545"/>
<text x="2299" y="690.5" font-size="14.5" fill="#e4e4e4" textLength="31.5" lengthAdjust="spacingAndGlyphs">Black</text>
<path d="M2461.75 682.4 L2465.5 686.6 L2469.25 682.4" fill="none" stroke="#e6e6e6" stroke-width="1.8"/>
<rect x="2482.6" y="672.2" width="28.7" height="24.4" rx="2.5" fill="#fff"/>
<clipPath id="c2516_672"><rect x="2516" y="672.2" width="26.8" height="24.4" rx="2.5"/></clipPath><rect x="2516" y="672.2" width="26.8" height="24.4" rx="2.5" fill="#fff"/><path d="M2516 696.6 L2542.8 672.2" stroke="#e0383e" stroke-width="1.4" clip-path="url(#c2516_672)"/>
<rect x="2187.8" y="705.4" width="353.5" height="19.9" rx="2" fill="#454545"/>
<text x="2193" y="721.3" font-size="14.5" fill="#e4e4e4" textLength="58.5" lengthAdjust="spacingAndGlyphs">[No Style]</text>
<path d="M2528.05 713.2 L2531.8 717.4 L2535.55 713.2" fill="none" stroke="#e6e6e6" stroke-width="1.8"/>
<rect x="2168.5" y="740.6" width="368.5" height="22.4" fill="#2a2a2a"/>
<path d="M2175.3 749 L2178.8 753 L2182.3 749" fill="none" stroke="#e0e0e0" stroke-width="1.6"/>
<text x="2194.4" y="756" font-size="15.5" fill="#f0f0f0" textLength="78.6" lengthAdjust="spacingAndGlyphs">Decorations</text>
<path d="M2545 754 l4 -8 l4 8z" fill="#8a8a8a"/>
<path d="M2545 1004.5 l4 8 l4 -8z" fill="#8a8a8a"/>
<rect x="2545" y="762" width="8.3" height="151" rx="4.1" fill="#8c8c8c"/>
<rect x="2187.8" y="773" width="31.9" height="22" rx="2" fill="#242424"/>
<rect x="2221" y="773" width="32" height="22" rx="2" fill="#454545"/>
<rect x="2254.8" y="773" width="32.4" height="22" rx="2" fill="#454545"/>
<text x="2203.7" y="789" font-size="17" fill="#f0f0f0" text-anchor="middle">U</text>
<text x="2237" y="789" font-size="17" fill="#f0f0f0" text-anchor="middle">U</text>
<rect x="2231" y="791" width="12" height="1.2" fill="#f0f0f0"/>
<text x="2271" y="788" font-size="17" fill="#f0f0f0" text-anchor="middle">U</text>
<rect x="2265" y="789.6" width="12" height="1" fill="#f0f0f0"/>
<rect x="2265" y="791.8" width="12" height="1" fill="#f0f0f0"/>
<clipPath id="c2292_771"><rect x="2292.4" y="771" width="26.6" height="25.3" rx="2.5"/></clipPath><rect x="2292.4" y="771" width="26.6" height="25.3" rx="2.5" fill="#fff"/><path d="M2292.4 796.3 L2319 771" stroke="#e0383e" stroke-width="1.4" clip-path="url(#c2292_771)"/>
<rect x="2331.3" y="773" width="32.2" height="22" rx="2" fill="#242424"/>
<rect x="2365" y="773" width="32.3" height="22" rx="2" fill="#454545"/>
<rect x="2398.8" y="773" width="32.2" height="22" rx="2" fill="#454545"/>
<text x="2347.5" y="790.5" font-size="17.5" fill="#f0f0f0" text-anchor="middle">S</text>
<text x="2381" y="790.5" font-size="17.5" fill="#f0f0f0" text-anchor="middle">S</text>
<rect x="2374.5" y="783.5" width="13" height="1.2" fill="#f0f0f0"/>
<text x="2415" y="790.5" font-size="17.5" fill="#f0f0f0" text-anchor="middle">S</text>
<rect x="2408.5" y="782.3" width="13" height="1" fill="#f0f0f0"/>
<rect x="2408.5" y="784.6" width="13" height="1" fill="#f0f0f0"/>
<clipPath id="c2435_771"><rect x="2435.9" y="771" width="27" height="25.3" rx="2.5"/></clipPath><rect x="2435.9" y="771" width="27" height="25.3" rx="2.5" fill="#fff"/><path d="M2435.9 796.3 L2462.9 771" stroke="#e0383e" stroke-width="1.4" clip-path="url(#c2435_771)"/>
<rect x="2185.6" y="813.4" width="199.4" height="24.4" rx="2" fill="#454545"/>
<rect x="2190.6" y="825" width="135" height="1.3" fill="#5c5c5c"/>
<text x="2340.6" y="831.6" font-size="14.5" fill="#e4e4e4" textLength="26.4" lengthAdjust="spacingAndGlyphs">0 pt</text>
<rect x="2397.4" y="813" width="50.1" height="25.2" rx="2.5" fill="#fff"/>
<path d="M2409.500 838.200 L2434.700 813" stroke="#e0383e" stroke-width="1.400"/>
<rect x="2168.5" y="847.2" width="368.5" height="24.3" fill="#2a2a2a"/>
<path d="M2175.3 856.5 L2178.8 860.5 L2182.3 856.5" fill="none" stroke="#e0e0e0" stroke-width="1.6"/>
<text x="2194.4" y="863" font-size="15.5" fill="#f0f0f0" textLength="171.6" lengthAdjust="spacingAndGlyphs">Positioning and Transform</text>
<rect x="2210.3" y="881" width="77.7" height="22" rx="2" fill="#1f1f1f"/>
<rect x="2289" y="881" width="18" height="22" rx="2" fill="#454545"/>
<path d="M2294.25 889.9 L2298 894.1 L2301.75 889.9" fill="none" stroke="#e6e6e6" stroke-width="1.8"/>
<rect x="2311" y="881" width="11.3" height="22" rx="2" fill="#404040"/><path d="M2313.05 888.8 L2316.65 885 L2320.25 888.8 M2313.05 895.2 L2316.65 899 L2320.25 895.2" fill="none" stroke="#e0e0e0" stroke-width="1.5"/>
<text x="2215" y="897.3" font-size="14.5" fill="#e4e4e4" textLength="29" lengthAdjust="spacingAndGlyphs">Auto</text>
<rect x="2376" y="881" width="79" height="22" rx="2" fill="#1f1f1f"/>
<rect x="2465" y="881" width="11" height="22" rx="2" fill="#404040"/><path d="M2466.9 888.8 L2470.5 885 L2474.1 888.8 M2466.9 895.2 L2470.5 899 L2474.1 895.2" fill="none" stroke="#e0e0e0" stroke-width="1.5"/>
<text x="2383" y="897.3" font-size="14.5" fill="#e4e4e4" textLength="17" lengthAdjust="spacingAndGlyphs">0 °</text>
<rect x="2210.3" y="911" width="77.7" height="22" rx="2" fill="#1f1f1f"/>
<rect x="2289" y="911" width="18" height="22" rx="2" fill="#454545"/>
<path d="M2294.25 919.9 L2298 924.1 L2301.75 919.9" fill="none" stroke="#e6e6e6" stroke-width="1.8"/>
<rect x="2311" y="911" width="11.3" height="22" rx="2" fill="#404040"/><path d="M2313.05 918.8 L2316.65 915 L2320.25 918.8 M2313.05 925.2 L2316.65 929 L2320.25 925.2" fill="none" stroke="#e0e0e0" stroke-width="1.5"/>
<text x="2216" y="927.3" font-size="14.5" fill="#e4e4e4" textLength="36" lengthAdjust="spacingAndGlyphs">72 ‰</text>
<rect x="2376" y="911" width="79" height="22" rx="2" fill="#1f1f1f"/>
<rect x="2465" y="911" width="11" height="22" rx="2" fill="#404040"/><path d="M2466.9 918.8 L2470.5 915 L2474.1 918.8 M2466.9 925.2 L2470.5 929 L2474.1 925.2" fill="none" stroke="#e0e0e0" stroke-width="1.5"/>
<text x="2383.5" y="927.3" font-size="14.5" fill="#e4e4e4" textLength="36.5" lengthAdjust="spacingAndGlyphs">100 %</text>
<rect x="2210.3" y="941" width="77.7" height="22" rx="2" fill="#1f1f1f"/>
<rect x="2289" y="941" width="18" height="22" rx="2" fill="#454545"/>
<path d="M2294.25 949.9 L2298 954.1 L2301.75 949.9" fill="none" stroke="#e6e6e6" stroke-width="1.8"/>
<rect x="2311" y="941" width="11.3" height="22" rx="2" fill="#404040"/><path d="M2313.05 948.8 L2316.65 945 L2320.25 948.8 M2313.05 955.2 L2316.65 959 L2320.25 955.2" fill="none" stroke="#e0e0e0" stroke-width="1.5"/>
<text x="2216" y="957.3" font-size="14.5" fill="#e4e4e4" textLength="24" lengthAdjust="spacingAndGlyphs">0 pt</text>
<rect x="2376" y="941" width="79" height="22" rx="2" fill="#1f1f1f"/>
<rect x="2465" y="941" width="11" height="22" rx="2" fill="#404040"/><path d="M2466.9 948.8 L2470.5 945 L2474.1 948.8 M2466.9 955.2 L2470.5 959 L2474.1 955.2" fill="none" stroke="#e0e0e0" stroke-width="1.5"/>
<text x="2383.5" y="957.3" font-size="14.5" fill="#e4e4e4" textLength="36.5" lengthAdjust="spacingAndGlyphs">100 %</text>
<rect x="2210.3" y="971" width="77.7" height="21" rx="2" fill="#1f1f1f"/>
<rect x="2289" y="971" width="18" height="21" rx="2" fill="#454545"/>
<path d="M2294.25 979.4 L2298 983.6 L2301.75 979.4" fill="none" stroke="#e6e6e6" stroke-width="1.8"/>
<rect x="2311" y="970.5" width="11.3" height="22" rx="2" fill="#404040"/><path d="M2313.05 978.3 L2316.65 974.5 L2320.25 978.3 M2313.05 984.7 L2316.65 988.5 L2320.25 984.7" fill="none" stroke="#e0e0e0" stroke-width="1.5"/>
<text x="2215" y="986.8" font-size="14.5" fill="#e4e4e4" textLength="40" lengthAdjust="spacingAndGlyphs">(12 pt)</text>
<rect x="2369.7" y="971" width="91.3" height="21" rx="2" fill="#454545"/>
<text x="2374.5" y="987" font-size="14.5" fill="#e4e4e4" textLength="33" lengthAdjust="spacingAndGlyphs">None</text>
<path d="M2448.25 979.4 L2452 983.6 L2455.75 979.4" fill="none" stroke="#e6e6e6" stroke-width="1.8"/>
<rect x="2175.6" y="997" width="14.1" height="13.3" rx="2" fill="#262626"/>
<text x="2195.3" y="1008.7" font-size="14.5" fill="#a8a8a8" textLength="55.3" lengthAdjust="spacingAndGlyphs">No break</text>
<rect x="2168.5" y="1018.5" width="391.5" height="3.5" fill="#303030"/>
<rect x="2168.5" y="1022" width="391.5" height="37" fill="#2a2a2a"/>
<rect x="2264.7" y="1024" width="72.6" height="35.3" fill="#3a3a3a"/>
<rect x="2177" y="1035" width="1.3" height="11" fill="#8a8a8a"/><rect x="2181.2" y="1035" width="1.3" height="11" fill="#8a8a8a"/>
<rect x="2537" y="1034.5" width="13" height="2.3" fill="#d8d8d8"/><rect x="2537" y="1039.4" width="13" height="2.3" fill="#d8d8d8"/><rect x="2537" y="1044.3" width="13" height="2.3" fill="#d8d8d8"/>
<text x="2198" y="1045.5" font-size="14.5" fill="#c4c4c4" textLength="59.8" lengthAdjust="spacingAndGlyphs">Transform</text>
<text x="2271.3" y="1045.5" font-size="14.5" fill="#fff" textLength="59" lengthAdjust="spacingAndGlyphs">Navigator</text>
<text x="2343.4" y="1045.5" font-size="14.5" fill="#c4c4c4" textLength="42.6" lengthAdjust="spacingAndGlyphs">History</text>
<rect x="2186.7" y="1072" width="21" height="20" rx="2" fill="#242424"/>
<rect x="2191.5" y="1081.3" width="11.5" height="1.6" fill="#eee"/>
<rect x="2214.4" y="1074" width="237.1" height="6.4" rx="3.2" fill="#242424"/>
<rect x="2214.4" y="1074" width="184.6" height="6.4" rx="3.2" fill="#4a78c2"/>
<path d="M2396 1070.300 h8 v9.500 l-4 3.200 l-4 -3.200z" fill="#e6e6e6"/>
<rect x="2217.4" y="1089" width="1.2" height="4" fill="#9a9a9a"/>
<rect x="2230.4" y="1089" width="1.2" height="4" fill="#9a9a9a"/>
<rect x="2258.1" y="1089" width="1.2" height="4" fill="#9a9a9a"/>
<rect x="2296" y="1089" width="1.2" height="4" fill="#9a9a9a"/>
<rect x="2308.4" y="1089" width="1.2" height="4" fill="#9a9a9a"/>
<rect x="2333.9" y="1089" width="1.2" height="4" fill="#9a9a9a"/>
<rect x="2358.4" y="1089" width="1.2" height="4" fill="#9a9a9a"/>
<rect x="2394" y="1089" width="1.2" height="4" fill="#9a9a9a"/>
<rect x="2406.4" y="1089" width="1.2" height="4" fill="#9a9a9a"/>
<rect x="2421.4" y="1089" width="1.2" height="4" fill="#9a9a9a"/>
<rect x="2446.4" y="1089" width="1.2" height="4" fill="#9a9a9a"/>
<rect x="2458.8" y="1072" width="21" height="20" rx="2" fill="#242424"/>
<path d="M2463.500 1082 h11.600 M2469.300 1076.200 v11.600" stroke="#eee" stroke-width="1.600"/>
<rect x="2486" y="1071" width="60" height="21.3" rx="2" fill="#1f1f1f"/>
<text x="2493" y="1087.5" font-size="14.5" fill="#e4e4e4" textLength="36.5" lengthAdjust="spacingAndGlyphs">170 %</text>
<rect x="2168.5" y="1099" width="391.5" height="1" fill="#303030"/>
<rect x="2175" y="1107" width="378" height="20.3" rx="2" fill="#454545"/>
<text x="2180" y="1123" font-size="14.5" fill="#e4e4e4" textLength="73.7" lengthAdjust="spacingAndGlyphs">View Point 1</text>
<path d="M2540.25 1114.9 L2544 1119.1 L2547.75 1114.9" fill="none" stroke="#e6e6e6" stroke-width="1.8"/>
<clipPath id="nv"><rect x="2176" y="1155.6" width="376.7" height="231.4"/></clipPath>
<g clip-path="url(#nv)"><rect x="2176" y="1155" width="377" height="233" fill="#fff"/><g transform="translate(2165.88 1126.13) scale(0.1808)"><use href="#art"/></g>
<rect x="2176.5" y="1156" width="375.7" height="218.4" fill="#888" fill-opacity="0.46" stroke="#2a2a3a" stroke-width="1"/></g>
<rect x="2168.5" y="1408" width="391.5" height="32" fill="#333333"/>
</g>
<g id="icons">
<clipPath id="pi15"><rect x="15.3" y="6.3" width="25" height="25" rx="2"/></clipPath><clipPath id="pi15b"><path d="M26.05 8.30 L38.80 8.30 L38.80 29.13 L17.13 29.13 L17.13 21.97z"/></clipPath><g clip-path="url(#pi15)"><rect x="15.3" y="6.3" width="25" height="25" fill="#cf2030"/><path d="M15.30 6.30 L26.13 6.30 L15.30 22.97z" fill="#a81a28"/><path d="M26.05 8.30 L38.80 8.30 L38.80 29.13 L17.13 29.13 L17.13 21.97z" fill="#ff8e58"/><g clip-path="url(#pi15b)"><path d="M13.47 4.13 L25.47 29.13" stroke="#b5311c" stroke-width="1.04"/><path d="M19.63 4.13 L31.63 29.13" stroke="#b5311c" stroke-width="1.04"/><path d="M25.63 4.13 L37.63 29.13" stroke="#b5311c" stroke-width="1.04"/><path d="M31.22 4.13 L43.22 29.13" stroke="#b5311c" stroke-width="1.04"/><path d="M36.22 4.13 L48.22 29.13" stroke="#b5311c" stroke-width="1.04"/></g></g>
<clipPath id="pi31"><rect x="31.4" y="53.4" width="30.3" height="30.3" rx="3"/></clipPath><clipPath id="pi31b"><path d="M44.43 55.82 L59.88 55.82 L59.88 81.07 L33.62 81.07 L33.62 72.39z"/></clipPath><g clip-path="url(#pi31)"><rect x="31.4" y="53.4" width="30.3" height="30.3" fill="#cf2030"/><path d="M31.40 53.40 L44.53 53.40 L31.40 73.60z" fill="#a81a28"/><path d="M44.43 55.82 L59.88 55.82 L59.88 81.07 L33.62 81.07 L33.62 72.39z" fill="#ff8e58"/><g clip-path="url(#pi31b)"><path d="M29.18 50.77 L43.72 81.07" stroke="#b5311c" stroke-width="1.26"/><path d="M36.65 50.77 L51.20 81.07" stroke="#b5311c" stroke-width="1.26"/><path d="M43.92 50.77 L58.47 81.07" stroke="#b5311c" stroke-width="1.26"/><path d="M50.69 50.77 L65.23 81.07" stroke="#b5311c" stroke-width="1.26"/><path d="M56.75 50.77 L71.30 81.07" stroke="#b5311c" stroke-width="1.26"/></g></g>
<clipPath id="di87"><rect x="87.7" y="53.4" width="30" height="30" rx="3"/></clipPath><g clip-path="url(#di87)"><rect x="87.7" y="53.4" width="30" height="30" fill="#6f93aa"/><path d="M87.70 53.40 L99.70 53.40 L87.70 73.40z" fill="#5a7896"/><path d="M101.70 55.90 L115.20 55.90 L115.20 80.90 L90.20 80.90 L90.20 72.40z" fill="#8fb6c9"/><path d="M105.20 55.90 L95.70 72.40 L100.20 80.90 M95.70 72.40 H115.20 M99.20 66.40 L104.70 75.90" stroke="#55788f" stroke-width="1.20" fill="none"/></g>
<clipPath id="ph144"><rect x="144" y="53.4" width="30" height="30" rx="3"/></clipPath><g clip-path="url(#ph144)"><rect x="144" y="53.4" width="30" height="30" fill="#ab8fc0"/><path d="M144.00 53.40 L156.00 53.40 L144.00 73.40z" fill="#8c7aa6"/><path d="M157.00 55.90 L171.50 55.90 L171.50 80.90 L146.50 80.90 L146.50 73.40z" fill="#cdb4e0"/><path d="M152.00 63.40 H162.00 L167.00 55.90 M162.00 63.40 L166.00 70.40 L171.50 61.40 M166.00 70.40 L162.50 74.90 H171.50 M162.50 74.90 H154.00 L158.00 80.90 M154.00 74.90 L152.00 70.40 L147.00 78.40 M152.00 70.40 L157.00 63.40" stroke="#9a7fb5" stroke-width="1.10" fill="none"/></g>
<path d="M391.92 60.69 L392.09 58.12 L395.31 58.12 L395.48 60.69 L398.17 61.81 L400.12 60.11 L402.39 62.38 L400.69 64.33 L401.81 67.02 L404.38 67.19 L404.38 70.41 L401.81 70.58 L400.69 73.27 L402.39 75.22 L400.12 77.49 L398.17 75.79 L395.48 76.91 L395.31 79.48 L392.09 79.48 L391.92 76.91 L389.23 75.79 L387.28 77.49 L385.01 75.22 L386.71 73.27 L385.59 70.58 L383.02 70.41 L383.02 67.19 L385.59 67.02 L386.71 64.33 L385.01 62.38 L387.28 60.11 L389.23 61.81z" fill="#c9c9c9"/><circle cx="393.7" cy="68.8" r="6.2" fill="#1f2a24"/>
<circle cx="393.7" cy="68.8" r="3.9" fill="#174a2c" stroke="#5fe39c" stroke-width="2.3"/>
<path d="M435.72 60.69 L435.89 58.12 L439.11 58.12 L439.28 60.69 L441.97 61.81 L443.92 60.11 L446.19 62.38 L444.49 64.33 L445.61 67.02 L448.18 67.19 L448.18 70.41 L445.61 70.58 L444.49 73.27 L446.19 75.22 L443.92 77.49 L441.97 75.79 L439.28 76.91 L439.11 79.48 L435.89 79.48 L435.72 76.91 L433.03 75.79 L431.08 77.49 L428.81 75.22 L430.51 73.27 L429.39 70.58 L426.82 70.41 L426.82 67.19 L429.39 67.02 L430.51 64.33 L428.81 62.38 L431.08 60.11 L433.03 61.81z" fill="#c9c9c9"/><circle cx="437.5" cy="68.8" r="6.2" fill="#1f2a24"/>
<circle cx="437.5" cy="68.8" r="6.2" fill="#33302c"/><path d="M433.900 72.300 L441.100 65.300" stroke="#ea3f60" stroke-width="3" stroke-linecap="round"/>
<rect x="649" y="57" width="23.2" height="1.2" fill="#e8e8e8"/>
<rect x="693" y="57" width="23" height="1.2" fill="#e8e8e8"/>
<rect x="649" y="59.72" width="23.2" height="1.2" fill="#bdbdbd"/>
<rect x="693" y="59.72" width="23" height="1.2" fill="#bdbdbd"/>
<rect x="649" y="62.44" width="23.2" height="1.2" fill="#bdbdbd"/>
<rect x="693" y="62.44" width="23" height="1.2" fill="#bdbdbd"/>
<rect x="649" y="65.16" width="23.2" height="1.2" fill="#bdbdbd"/>
<rect x="693" y="65.16" width="23" height="1.2" fill="#bdbdbd"/>
<rect x="649" y="67.88" width="23.2" height="1.2" fill="#bdbdbd"/>
<rect x="693" y="67.88" width="23" height="1.2" fill="#bdbdbd"/>
<rect x="649" y="70.6" width="23.2" height="1.2" fill="#bdbdbd"/>
<rect x="693" y="70.6" width="23" height="1.2" fill="#bdbdbd"/>
<rect x="649" y="73.32" width="23.2" height="1.2" fill="#bdbdbd"/>
<rect x="693" y="73.32" width="23" height="1.2" fill="#bdbdbd"/>
<rect x="649" y="76.04" width="23.2" height="1.2" fill="#bdbdbd"/>
<rect x="693" y="76.04" width="23" height="1.2" fill="#bdbdbd"/>
<rect x="649" y="78.76" width="23.2" height="1.2" fill="#e8e8e8"/>
<rect x="693" y="78.76" width="23" height="1.2" fill="#e8e8e8"/>
<path d="M653.300 60.300 H661.800 L667.800 66.500 V75.600 H653.300z" fill="#fff"/><path d="M655.200 62.200 H661 L665.900 67.300 V73.700 H655.200z" fill="#efefef" stroke="#4a4a4a" stroke-width="1"/>
<circle cx="704.2" cy="68.200" r="8" fill="#454545"/>
<rect x="697.5" y="62.44" width="13.5" height="1.2" fill="#a8a8a8"/>
<rect x="697.5" y="65.16" width="13.5" height="1.2" fill="#a8a8a8"/>
<rect x="697.5" y="67.88" width="13.5" height="1.2" fill="#a8a8a8"/>
<rect x="697.5" y="70.6" width="13.5" height="1.2" fill="#a8a8a8"/>
<rect x="697.5" y="73.32" width="13.5" height="1.2" fill="#a8a8a8"/>
<circle cx="704.2" cy="68.200" r="8" fill="none" stroke="#f2f2f2" stroke-width="1.600"/>
<rect x="742.2" y="63.300" width="11.400" height="9.900" fill="none" stroke="#5c5c5c" stroke-width="1.200"/><path d="M745 65.500 l5.800 5.500 M750.800 65.500 l-5.800 5.500" stroke="#5c5c5c" stroke-width="1.400"/>
<circle cx="970" cy="64.300" r="4.800" fill="#f0f0f0"/><rect x="969" y="68" width="2" height="8.300" fill="#e6e6e6"/>
<rect x="1004" y="59.3" width="12.5" height="1.3" fill="#e0e0e0"/>
<rect x="1004" y="61.9" width="20" height="1.3" fill="#909090"/>
<rect x="1004" y="64.4" width="13" height="1.3" fill="#d0d0d0"/>
<rect x="1004" y="74.3" width="13" height="1.3" fill="#d0d0d0"/>
<rect x="1004" y="76.9" width="20" height="1.3" fill="#b0b0b0"/>
<rect x="1015" y="66.7" width="9" height="1.3" fill="#b0b0b0"/>
<rect x="1015" y="69.3" width="5" height="1.3" fill="#909090"/>
<rect x="1015" y="71.9" width="9" height="1.3" fill="#b0b0b0"/>
<rect x="1006.7" y="66.1" width="6.8" height="6.7" fill="#f4f4f4"/>
<path d="M1231.800 69.700 L1227.500 65.600 Q1237 58 1246.500 65.600 L1244 69.400 L1240.800 68.300" fill="none" stroke="#e4e4e4" stroke-width="1.500" stroke-linejoin="round"/>
<path d="M1241.300 63.600 L1245.400 65.500 L1243.500 68.600 L1240 67.500z" fill="#3fa4d8"/>
<path d="M1236.800 73.600 L1240.600 63.300" stroke="#e4e4e4" stroke-width="1.500"/><path d="M1231.800 69.700 L1236 68.600" stroke="#e4e4e4" stroke-width="1.500"/>
<rect x="1320.7" y="57.3" width="22.3" height="1.7" fill="#3aa2c9"/>
<rect x="1320.7" y="62.3" width="22.3" height="1.7" fill="#3aa2c9"/>
<rect x="1320.7" y="67.3" width="22.3" height="1.7" fill="#3aa2c9"/>
<rect x="1320.7" y="72.3" width="22.3" height="1.7" fill="#3aa2c9"/>
<rect x="1320.7" y="77.3" width="22.3" height="1.7" fill="#3aa2c9"/>
<text x="1332" y="74.6" font-size="15.5" fill="#d4d4d4" text-anchor="middle" stroke="#454545" stroke-width="2.200" paint-order="stroke" font-weight="bold">A</text>
<g transform="rotate(45 1429 66.500)"><path d="M1422.700 74 V66.500 A6.300 6.300 0 0 1 1435.300 66.500 V74" fill="none" stroke="#e9394f" stroke-width="4.600"/><rect x="1420.400" y="72.500" width="4.600" height="3.600" fill="#fff"/><rect x="1433" y="72.500" width="4.600" height="3.600" fill="#fff"/></g>
<rect x="1657.5" y="58.7" width="7.7" height="7.2" rx="1.2" fill="#b9b7ba"/>
<rect x="1670" y="71.2" width="7.7" height="7.2" rx="1.2" fill="#b9b7ba"/>
<path d="M1664.800 62.500 h9 v9 h-3.500 v3.500 h-9 v-9 h3.500z" fill="#ff6b4e"/>
<rect x="1708.9" y="66.3" width="12.6" height="12.6" rx="1.2" fill="#ff6b4e"/>
<rect x="1700.7" y="58.2" width="14.7" height="14.7" rx="1.5" fill="#454545"/>
<rect x="1701.2" y="58.7" width="13.7" height="13.7" rx="1.5" fill="#b9b7ba"/>
<rect x="1745" y="58.7" width="12.6" height="12.5" rx="1.2" fill="#b9b7ba"/>
<rect x="1750.5" y="64.2" width="15.2" height="15.2" rx="1.5" fill="#454545"/>
<rect x="1751" y="64.7" width="14.2" height="14.2" rx="1.5" fill="#ff6b4e"/>
<rect x="1788.7" y="58.7" width="7.7" height="7.2" rx="1.2" fill="#b9b7ba"/>
<rect x="1801.9" y="71.2" width="7.3" height="7.7" rx="1.2" fill="#b9b7ba"/>
<rect x="1791.4" y="61.9" width="14.4" height="13.7" rx="1.5" fill="#454545"/>
<rect x="1792" y="62.5" width="13.2" height="12.5" rx="1.2" fill="#ff6b4e"/>
<rect x="1884.8" y="58.7" width="1.6" height="19.7" fill="#c8c8c8"/>
<rect x="1887.7" y="63" width="14.8" height="4.4" rx="0.8" fill="#2ea9d6"/>
<rect x="1887.7" y="70.7" width="8.8" height="4.3" rx="0.8" fill="#2ea9d6"/>
<path d="M1977.800 79.100 H1987.500 V60.600z" fill="#2ea9d6"/><path d="M1989.700 60.600 V79.100 H1999.300z" fill="#c0bfc0"/>
<path d="M2042.400 58.400 V67.300 H2023.800z" fill="#2ea9d6"/><path d="M2023.800 70.200 H2042.400 V79.100z" fill="#c0bfc0"/>
<rect x="2066.1" y="59.1" width="8.2" height="20" rx="0.8" fill="#2ea9d6"/>
<rect x="2075.8" y="70.2" width="8.9" height="8.9" rx="0.8" fill="#c0bfc0"/>
<path d="M2083.300 68 V63.800 H2078.500" fill="none" stroke="#f2f2f2" stroke-width="1.500"/><path d="M2080.300 61 L2077.300 63.800 L2080.300 66.600z" fill="#f2f2f2"/>
<rect x="2109.9" y="59.1" width="8.2" height="20" rx="0.8" fill="#2ea9d6"/>
<rect x="2119.6" y="59.1" width="8.9" height="7.4" rx="0.8" fill="#c0bfc0"/>
<path d="M2127 69.500 V74 H2122.500" fill="none" stroke="#f2f2f2" stroke-width="1.500"/><path d="M2124.200 71.200 L2121.200 74 L2124.200 76.800z" fill="#f2f2f2"/>
<rect x="2210.8" y="65" width="14.2" height="14.1" rx="1" fill="#2fd4a9"/>
<circle cx="2211.9" cy="67.300" r="9.300" fill="#454545"/><circle cx="2211.900" cy="67.300" r="8.400" fill="#b9b7ba"/>
<circle cx="2256.100" cy="66.500" r="7.800" fill="#b9b7ba"/>
<rect x="2254.7" y="64.3" width="16.2" height="15.5" rx="1.5" fill="#454545"/>
<rect x="2255.4" y="65" width="14.8" height="14.1" rx="1" fill="#2fd4a9"/>
<circle cx="2302.100" cy="68.700" r="10" fill="#b9b7ba"/><path d="M2301.700 68.300 H2313 A10.500 10.500 0 0 1 2301.700 79.500z" fill="#454545"/><path d="M2303.300 69.800 H2312 A10 10 0 0 1 2303.300 78.600z" fill="#2fd4a9"/>
<circle cx="2525.300" cy="65.600" r="4.700" fill="none" stroke="#55db92" stroke-width="1.800"/><path d="M2514.300 79.700 Q2516.500 71.300 2525.300 71.300 Q2534 71.300 2536.300 79.700" fill="none" stroke="#55db92" stroke-width="1.800"/>
<rect x="8.4" y="214.8" width="37.8" height="1.4" fill="#5e5e5e"/>
<rect x="8.4" y="547.7" width="37.8" height="1.4" fill="#5e5e5e"/>
<rect x="8.4" y="600.2" width="37.8" height="1.4" fill="#5e5e5e"/>
<rect x="8.4" y="722.5" width="37.8" height="1.4" fill="#5e5e5e"/>
<path d="M21.500 145.400 V160.700 L25.700 157.600 L29.200 164.200 L32.200 162.600 L29 156.300 L34.500 155.900z" fill="#111" stroke="#e8e8e8" stroke-width="1.400" stroke-linejoin="round"/>
<path d="M22.900 183.400 V197.800 L26.600 193.500 L34.200 191.300z" fill="#f0f0f0"/>
<rect x="16" y="230.8" width="22.9" height="23" rx="2.5" fill="#dfe4e8" stroke="#f4f4f4" stroke-width="1.200"/>
<rect x="18" y="232.800" width="18.900" height="19" rx="1.500" fill="none" stroke="#8e979e" stroke-width="0.900"/>
<path d="M20.800 237.800 H34 M27.400 237.800 V248.400" stroke="#1f4d6c" stroke-width="2.600" fill="none"/>
<rect x="16.6" y="266.2" width="21.7" height="21.7" rx="2.2" fill="#3a3630" stroke="#f0883a" stroke-width="1.300"/>
<path d="M16.600 273.700 H38.300 M16.600 280.800 H38.300 M23.800 266.200 V287.900" stroke="#f0883a" stroke-width="1.200"/>
<rect x="18.6" y="268.7" width="3.3" height="2.6" fill="#ffd94a"/>
<rect x="26" y="268.8" width="10" height="2.4" fill="#ffd94a"/>
<rect x="18.6" y="275.6" width="3.3" height="3.3" fill="#ffd94a"/>
<rect x="18.6" y="282.7" width="3.3" height="3.3" fill="#ffd94a"/>
<rect x="10.4" y="295.4" width="34.2" height="34.2" rx="4" fill="#242424"/>
<rect x="17.600" y="300" width="20" height="22.500" fill="none" stroke="#3b8ac4" stroke-width="1.500"/>
<circle cx="17.6" cy="300" r="1.700" fill="#3b8ac4"/>
<circle cx="37.6" cy="300" r="1.700" fill="#3b8ac4"/>
<circle cx="17.6" cy="322.5" r="1.700" fill="#3b8ac4"/>
<circle cx="37.6" cy="322.5" r="1.700" fill="#3b8ac4"/>
<text x="27.6" y="318" font-size="18" fill="#f2f2f2" text-anchor="middle">A</text>
<path d="M16.300 357.800 L20.300 346.200 L28.800 343 L33.400 347.600 L29.800 355.200z" fill="#d9d9d9"/><path d="M16.300 357.800 L24.800 349.300" stroke="#444" stroke-width="1.100"/><circle cx="25.300" cy="348.800" r="1.500" fill="#444"/>
<path d="M29.600 342.300 L33.900 338 L39.700 343.800 L35.400 348.100z" fill="#f0685c"/>
<rect x="18.6" y="374" width="17.8" height="17.6" rx="1" fill="#252a2c" stroke="#dcdcdc" stroke-width="1.500"/>
<path d="M36.600 397.200 H43.300 V391.200z" fill="#f0f0f0"/>
<path d="M16.900 409.900 H38.400 V424.800 H16.900z M16.900 409.900 L38.400 424.800 M38.400 409.900 L16.900 424.800" fill="#262626" stroke="#dcdcdc" stroke-width="1.500" stroke-linejoin="round"/>
<circle cx="27.600" cy="452.400" r="10.600" fill="#262626" stroke="#dcdcdc" stroke-width="1.500"/><path d="M20.100 444.900 L35.100 459.900 M35.100 444.900 L20.100 459.900" stroke="#dcdcdc" stroke-width="1.400"/>
<clipPath id="imgc"><rect x="16.100" y="478.500" width="23" height="17.200" rx="1.500"/></clipPath><g clip-path="url(#imgc)">
<rect x="16.1" y="478.5" width="23" height="17.2" fill="#58a6cf"/>
<circle cx="33.800" cy="483" r="2.100" fill="#eef6fb"/><path d="M19.500 485 q1.500 -3 4 -2 q2 -2.500 4 0.500 q2 0 2 1.500z" fill="#f4f8fb"/>
<path d="M16 489 q5 -3.500 10 -0.500 q6 2.500 13.500 -2 V496 H16z" fill="#2a6d96"/><path d="M16 492.500 q7 -2.500 12 0 q6 2 11.500 -1 V496 H16z" fill="#1d5379"/>
</g>
<path d="M16.600 511.800 H27 V515 M16.600 511.800 V526.500 H20" fill="none" stroke="#c9c99c" stroke-width="1.400"/>
<path d="M38.600 533.400 H28 V530 M38.600 533.400 V518.800 H35" fill="none" stroke="#c9c99c" stroke-width="1.400"/>
<rect x="19" y="514.6" width="3.6" height="1.1" fill="#e8e8d8"/>
<rect x="32.6" y="520" width="3.6" height="1.1" fill="#e8e8d8"/>
<rect x="19" y="516.9" width="3.6" height="1.1" fill="#e8e8d8"/>
<rect x="32.6" y="522.3" width="3.6" height="1.1" fill="#e8e8d8"/>
<rect x="19" y="519.2" width="3.6" height="1.1" fill="#e8e8d8"/>
<rect x="32.6" y="524.6" width="3.6" height="1.1" fill="#e8e8d8"/>
<rect x="19" y="521.5" width="3.6" height="1.1" fill="#e8e8d8"/>
<rect x="32.6" y="526.9" width="3.6" height="1.1" fill="#e8e8d8"/>
<rect x="19" y="523.8" width="3.6" height="1.1" fill="#e8e8d8"/>
<rect x="32.6" y="529.2" width="3.6" height="1.1" fill="#e8e8d8"/>
<path d="M24.500 516 H31.500 L24.500 525z" fill="#8ba72c"/><path d="M31 529.500 H24 L31 520.500z" fill="#8ba72c"/>
<path d="M22.500 565.300 V580.200 H37.300 M17.800 570 H32.900 V585" fill="none" stroke="#f0f0f0" stroke-width="1.700"/><path d="M18.700 583.200 L34.600 566.300" stroke="#f0f0f0" stroke-width="1.300"/>
<linearGradient id="gt" x1="0" y1="0" x2="1" y2="0"><stop offset="0" stop-color="#2f8ed8"/><stop offset="0.5" stop-color="#9cc8ea"/><stop offset="1" stop-color="#f3d7ab"/></linearGradient>
<g transform="rotate(-43 27.600 627.300)"><rect x="18" y="618.800" width="19" height="7" rx="1" fill="url(#gt)"/><rect x="18" y="628.600" width="19" height="7" rx="1" fill="url(#gt)"/><path d="M16 627.300 H39" stroke="#f0f0f0" stroke-width="1.300"/><circle cx="15" cy="627.300" r="2" fill="#3a3a3a" stroke="#f0f0f0" stroke-width="1.200"/><circle cx="40.200" cy="627.300" r="2" fill="#3a3a3a" stroke="#f0f0f0" stroke-width="1.200"/></g>
<path d="M22.300 656.500 Q21 668 28 668 Q35 668 33.700 656.500z" fill="#2d6ea3"/><path d="M23.500 656.800 h4.300 v10.500 q-4.800 -0.800 -4.300 -10.500z" fill="#7db9e6"/>
<path d="M22 652.500 Q19.500 668.300 28 668.300 Q36.500 668.300 34 652.500 M28 668.300 V673.300 M21.300 673.600 H34.700" fill="none" stroke="#e6e6e6" stroke-width="1.500"/>
<path d="M18.300 705.300 L29.300 694.300" stroke="#d4d4d4" stroke-width="3.600" stroke-linecap="round"/><path d="M27 692.500 L31.800 697.300" stroke="#b06a44" stroke-width="2.500"/><ellipse cx="33.500" cy="691" rx="5.400" ry="4.200" transform="rotate(-45 33.500 691)" fill="#d98b5c"/>
<path d="M36.500 711.400 H43 V705.800z" fill="#f0f0f0"/>
<path d="M21.200 752 V744.500 Q21.200 743 22.600 743 Q24 743 24 744.500 V741 Q24 739.300 25.500 739.300 Q27 739.300 27 741 V740.300 Q27 738.600 28.500 738.600 Q30 738.600 30 740.300 V742 Q30 740.500 31.400 740.500 Q32.800 740.500 32.800 742 V752.500 L35 749 Q36.300 747.500 37.300 748.500 Q38 749.500 37 751 L33 758.500 Q31.500 761.800 27.500 761.800 Q21.200 761.800 21.200 755z" fill="#f2d9c2" stroke="#fbfbfb" stroke-width="1.100" stroke-linejoin="round"/>
<path d="M24 744.500 V750 M27 741 V749.500 M30 742 V750" stroke="#fbfbfb" stroke-width="1"/>
<path d="M23.600 788 L17.300 794.300" stroke="#e8c392" stroke-width="4.200" stroke-linecap="round"/><circle cx="30" cy="781.600" r="7.700" fill="#93d2f8" stroke="#f6f6f6" stroke-width="2.600"/><circle cx="28.500" cy="780" r="3" fill="#c2e6fb"/>
<text x="840.5" y="125" font-size="17" fill="#6e6e6e" text-anchor="middle">a</text>
<path d="M838 109.300 H855 V125.500" fill="none" stroke="#6e6e6e" stroke-width="1.300"/><path d="M838.500 109.300 l4 -3 v6z" fill="#6e6e6e"/>
<rect x="846.5" y="113" width="6" height="1.4" fill="#6e6e6e"/>
<rect x="846.5" y="116.3" width="6" height="1.4" fill="#6e6e6e"/>
<rect x="846.5" y="119.6" width="6" height="1.4" fill="#6e6e6e"/>
<rect x="846.5" y="122.9" width="6" height="1.4" fill="#6e6e6e"/>
<text x="1143" y="125.5" font-size="14" fill="#6e6e6e" text-anchor="middle">¶</text>
<path d="M1141 109.300 H1158 V125.500" fill="none" stroke="#6e6e6e" stroke-width="1.300"/><path d="M1141.500 109.300 l4 -3 v6z" fill="#6e6e6e"/>
<rect x="1149.5" y="113" width="6" height="1.4" fill="#6e6e6e"/>
<rect x="1149.5" y="116.3" width="6" height="1.4" fill="#6e6e6e"/>
<rect x="1149.5" y="119.6" width="6" height="1.4" fill="#6e6e6e"/>
<rect x="1149.5" y="122.9" width="6" height="1.4" fill="#6e6e6e"/>
<rect x="1269.8" y="107.3" width="15.2" height="1.4" fill="#f0f0f0"/><rect x="1269.8" y="110.1" width="11" height="1.4" fill="#f0f0f0"/><rect x="1269.8" y="112.9" width="15.2" height="1.4" fill="#f0f0f0"/><rect x="1269.8" y="115.7" width="11" height="1.4" fill="#f0f0f0"/><rect x="1269.8" y="118.5" width="15.2" height="1.4" fill="#f0f0f0"/><rect x="1269.8" y="121.3" width="8" height="1.4" fill="#f0f0f0"/>
<rect x="1303.4" y="107.3" width="15.2" height="1.4" fill="#f0f0f0"/><rect x="1305.5" y="110.1" width="11" height="1.4" fill="#f0f0f0"/><rect x="1303.4" y="112.9" width="15.2" height="1.4" fill="#f0f0f0"/><rect x="1305.5" y="115.7" width="11" height="1.4" fill="#f0f0f0"/><rect x="1303.4" y="118.5" width="15.2" height="1.4" fill="#f0f0f0"/><rect x="1306.5" y="121.3" width="9" height="1.4" fill="#f0f0f0"/>
<rect x="1337.2" y="107.3" width="15.2" height="1.4" fill="#f0f0f0"/><rect x="1341.4" y="110.1" width="11" height="1.4" fill="#f0f0f0"/><rect x="1337.2" y="112.9" width="15.2" height="1.4" fill="#f0f0f0"/><rect x="1341.4" y="115.7" width="11" height="1.4" fill="#f0f0f0"/><rect x="1337.2" y="118.5" width="15.2" height="1.4" fill="#f0f0f0"/><rect x="1344.4" y="121.3" width="8" height="1.4" fill="#f0f0f0"/>
<rect x="1371" y="107.3" width="15.2" height="1.4" fill="#f0f0f0"/><rect x="1371" y="110.1" width="15.2" height="1.4" fill="#f0f0f0"/><rect x="1371" y="112.9" width="15.2" height="1.4" fill="#f0f0f0"/><rect x="1371" y="115.7" width="15.2" height="1.4" fill="#f0f0f0"/><rect x="1371" y="118.5" width="15.2" height="1.4" fill="#f0f0f0"/><rect x="1371" y="121.3" width="9" height="1.4" fill="#f0f0f0"/>
<path d="M1618 112.300 H1627.500 A3.400 3.400 0 0 1 1627.500 119.100 H1625.500" fill="none" stroke="#f0f0f0" stroke-width="1.500"/><path d="M1614.600 112.300 l4.200 -3 v6z" fill="#f0f0f0"/><circle cx="1622.500" cy="119.200" r="1.800" fill="#f0f0f0"/>
<rect x="1689" y="109" width="13" height="15" fill="none" stroke="#f0f0f0" stroke-width="1.400"/>
<circle cx="1689" cy="109" r="1.500" fill="#f0f0f0"/>
<circle cx="1702" cy="109" r="1.500" fill="#f0f0f0"/>
<circle cx="1689" cy="124" r="1.500" fill="#f0f0f0"/>
<circle cx="1702" cy="124" r="1.500" fill="#f0f0f0"/>
<path d="M1692.300 113.300 H1698.700 M1695.500 113.300 V120.500" stroke="#f0f0f0" stroke-width="1.400" fill="none"/>
<text x="2185.2" y="895" font-size="14" fill="#c8c8c8" textLength="19.1" lengthAdjust="spacingAndGlyphs">V/A</text>
<path d="M2197.5 898.6 H2202.8" stroke="#c8c8c8" stroke-width="1.2"/><path d="M2195.5 898.6 l2.8 -2 v4z M2204.8 898.6 l-2.8 -2 v4z" fill="#c8c8c8"/>
<text x="2186.5" y="924.6" font-size="14" fill="#c8c8c8" textLength="16.8" lengthAdjust="spacingAndGlyphs">VA</text>
<path d="M2188.7 928.9 H2201.3" stroke="#c8c8c8" stroke-width="1.2"/><path d="M2186.3 928.9 l3.2 -2.4 v4.8z M2203.7 928.9 l-3.2 -2.4 v4.8z" fill="#c8c8c8"/>
<text x="2197.8" y="951.8" font-size="11.5" fill="#c8c8c8" text-anchor="middle">A</text>
<rect x="2193" y="953.6" width="9.8" height="1.2" fill="#c8c8c8"/>
<path d="M2187.8 951.7 V958.3" stroke="#c8c8c8" stroke-width="1.2"/><path d="M2187.8 949.5 l-2.2 3 h4.4z M2187.8 960.5 l-2.2 -3 h4.4z" fill="#c8c8c8"/>
<text x="2197.6" y="979.5" font-size="8.5" fill="#c8c8c8" text-anchor="middle" font-weight="bold">A</text>
<rect x="2194" y="980.4" width="7.2" height="1.1" fill="#c8c8c8"/>
<text x="2197.6" y="988.5" font-size="8.5" fill="#c8c8c8" text-anchor="middle" font-weight="bold">A</text>
<rect x="2194" y="989.4" width="7.2" height="1.1" fill="#c8c8c8"/>
<path d="M2187.8 979.2 V987.6" stroke="#c8c8c8" stroke-width="1.2"/><path d="M2187.8 977 l-2.2 3 h4.4z M2187.8 989.8 l-2.2 -3 h4.4z" fill="#c8c8c8"/>
<text x="2355.5" y="898.2" font-size="19" fill="#c8c8c8" text-anchor="middle" font-family="Liberation Serif,serif" font-style="italic">T</text>
<text x="2355.5" y="924.6" font-size="16.5" fill="#c8c8c8" text-anchor="middle" font-family="Liberation Serif,serif">T</text>
<path d="M2349.4 927.9 H2361.2" stroke="#c8c8c8" stroke-width="1.2"/><path d="M2347 927.9 l3.2 -2.4 v4.8z M2363.6 927.9 l-3.2 -2.4 v4.8z" fill="#c8c8c8"/>
<path d="M2349.3 945.9 V957.6" stroke="#c8c8c8" stroke-width="1.2"/><path d="M2349.3 943.7 l-2.2 3 h4.4z M2349.3 959.8 l-2.2 -3 h4.4z" fill="#c8c8c8"/>
<text x="2358.6" y="957.6" font-size="16" fill="#c8c8c8" text-anchor="middle" font-family="Liberation Serif,serif">T</text>
<text x="2353.4" y="987" font-size="17" fill="#c8c8c8" text-anchor="middle">S</text>
<circle cx="2360.500" cy="975.700" r="1.400" fill="#c8c8c8"/><circle cx="2360.500" cy="985.700" r="1.400" fill="#c8c8c8"/>
<rect x="8.7" y="1417" width="1.3" height="12" fill="#9a9a9a"/>
<path d="M21.300 1417 V1429 L10.900 1423z" fill="#9a9a9a"/>
<path d="M43.200 1417 V1429 L32.800 1423z" fill="#9a9a9a"/>
<path d="M155.100 1417 V1429 L165.300 1423z" fill="#ececec"/>
<path d="M176.100 1417 V1429 L186.500 1423z" fill="#9a9a9a"/>
<rect x="187.6" y="1417" width="1.3" height="12" fill="#9a9a9a"/>
<path d="M214.900 1417.300 V1431 H202.600" fill="none" stroke="#d0d0d0" stroke-width="1.300"/>
<rect x="200.8" y="1415.2" width="11.7" height="13.4" rx="0.8" fill="#3a3a3a" stroke="#dcdcdc" stroke-width="1.300"/>
<rect x="203" y="1417.6" width="7.3" height="1.6" fill="#f4f4f4"/>
<rect x="203" y="1420.4" width="7.3" height="1.3" fill="#9c9c9c"/>
<rect x="203" y="1422.7" width="7.3" height="1.3" fill="#9c9c9c"/>
<rect x="203" y="1425" width="7.3" height="1.3" fill="#9c9c9c"/>
<path d="M249.400 1417.300 V1431 H237" fill="none" stroke="#d0d0d0" stroke-width="1.300"/>
<rect x="234.6" y="1415.2" width="12.2" height="13.4" rx="1.2" fill="#1f5a38" stroke="#3fca72" stroke-width="1.400"/>
<rect x="236.8" y="1417.6" width="7.8" height="2.2" rx="0.5" fill="#46dc82"/>
<rect x="236.8" y="1421.1" width="7.8" height="2.2" rx="0.5" fill="#46dc82"/>
<rect x="236.8" y="1424.6" width="7.8" height="2.2" rx="0.5" fill="#46dc82"/>
</g>
</svg></body></html>
